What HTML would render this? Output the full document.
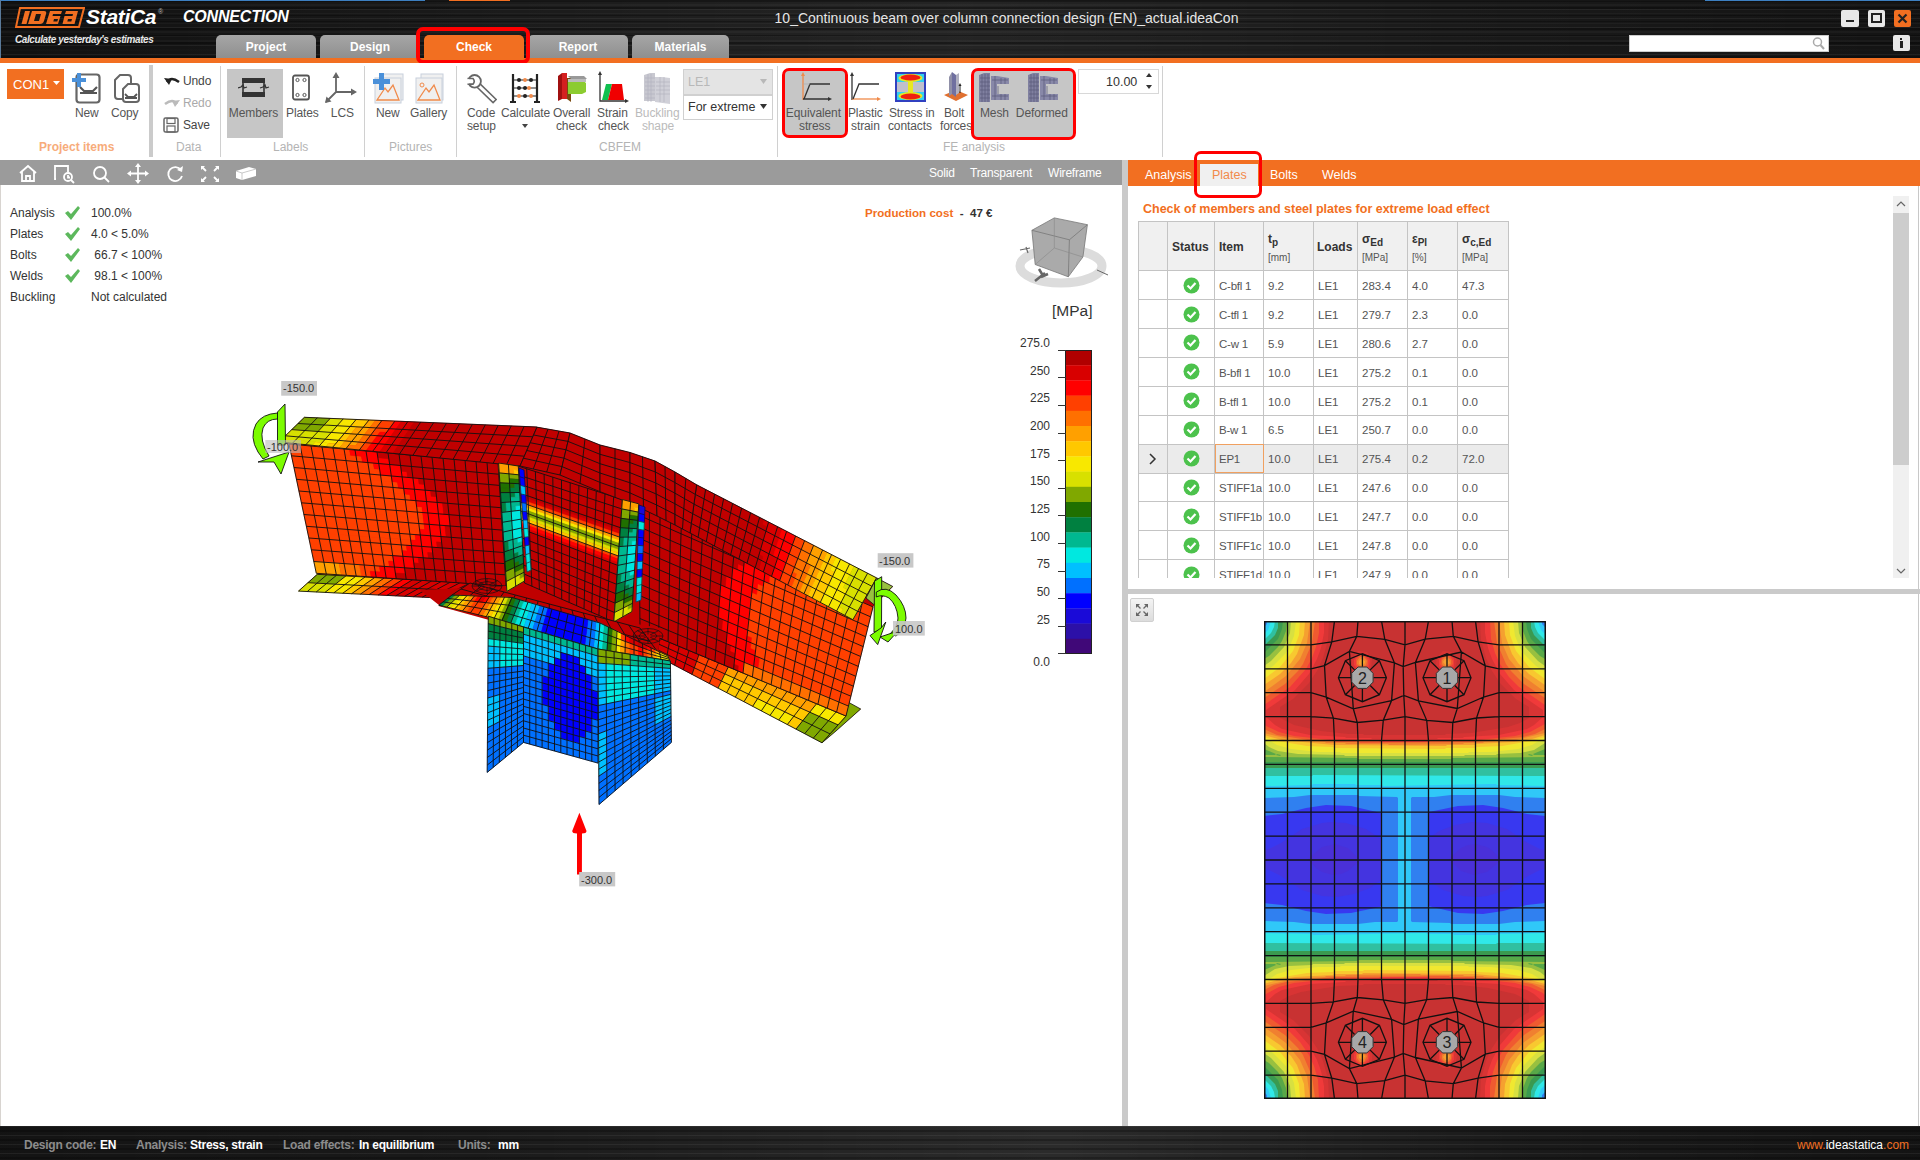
<!DOCTYPE html>
<html><head><meta charset="utf-8">
<style>
*{margin:0;padding:0;box-sizing:border-box}
html,body{width:1920px;height:1160px;overflow:hidden;background:#fff;font-family:"Liberation Sans",sans-serif;position:relative}
.a{position:absolute}
.dark{background-color:#0c0c0c;background-image:repeating-linear-gradient(180deg,rgba(255,255,255,0.06) 0 1px,rgba(0,0,0,0) 1px 4px,rgba(255,255,255,0.03) 4px 6px,rgba(0,0,0,0) 6px 9px),repeating-linear-gradient(180deg,rgba(0,0,0,0.3) 0 2px,rgba(0,0,0,0) 2px 7px),linear-gradient(90deg,rgba(255,255,255,0.02),rgba(255,255,255,0.05) 20%,rgba(255,255,255,0.1) 50%,rgba(255,255,255,0.06) 75%,rgba(255,255,255,0.03))}
.dark2{background-color:#0c0c0c;background-image:repeating-linear-gradient(180deg,rgba(255,255,255,0.06) 0 1px,rgba(0,0,0,0) 1px 4px,rgba(0,0,0,0.25) 4px 6px,rgba(0,0,0,0) 6px 9px),linear-gradient(90deg,rgba(255,255,255,0.03),rgba(255,255,255,0.06) 25%,rgba(255,255,255,0.13) 55%,rgba(255,255,255,0.06) 80%,rgba(255,255,255,0.03))}
.tab{position:absolute;top:35px;height:23px;width:100px;border-radius:5px 5px 0 0;background:linear-gradient(#a6a6a6,#8f8f8f);color:#fff;font-weight:bold;font-size:12px;text-align:center;line-height:25px}
.lbl{position:absolute;font-size:12px;letter-spacing:-0.1px;color:#555;white-space:nowrap}
.grp{position:absolute;top:140px;font-size:12px;color:#b4b4b4;white-space:nowrap}
.sep{position:absolute;top:66px;width:1px;height:91px;background:#d0d0d0}
</style></head><body>
<!-- title bar -->
<div class="a dark" style="left:0;top:0;width:1920px;height:58px"></div>
<div class="a" style="left:0;top:0;width:1920px;height:1px;background:#3d7fc0"></div>
<div class="a" style="left:449px;top:0;width:61px;height:1px;background:#f26f21"></div>
<div class="a" style="left:425px;top:0;width:24px;height:1px;background:#161616"></div>
<div class="a" style="left:510px;top:0;width:1195px;height:1px;background:#161616"></div>
<div class="a" style="left:0;top:0;width:1px;height:58px;background:#5a7a9a"></div><div class="a" style="left:0;top:63px;width:1px;height:1063px;background:#d8d4d0"></div>
<!-- logo -->
<svg class="a" style="left:15px;top:7px" width="70" height="22" viewBox="0 0 70 22">
<path d="M5 1 H69 L64 20 H1 Z" fill="none" stroke="#f26f21" stroke-width="2"/>
<path d="M10 4 h5 l-3.5 13 h-5 z M17 4 h12 q3 0 2 3 l-2 7 q-1 3 -4 3 h-12 z M35 4 h12 l-1 3 h-8 l-0.5 2 h8 l-2.5 8 h-12 z M51 4 h12 l-3.5 13 h-12 l2 -8 h8 l0.5 -2 h-8 z" fill="#f26f21"/>
<path d="M21 7 h5 l-2 7 h-5 z M39 12 h4 l-0.7 2.5 h-4 z M53 12 h4 l-0.7 2.5 h-4 z" fill="#161616"/>
</svg>
<div class="a" style="left:86px;top:5px;font-size:21px;font-style:italic;font-weight:bold;color:#fff;letter-spacing:-0.3px">StatiCa</div>
<div class="a" style="left:158px;top:8px;font-size:7px;color:#bbb">&#174;</div>
<div class="a" style="left:183px;top:8px;font-size:16px;font-style:italic;font-weight:bold;color:#fff;letter-spacing:-0.2px">CONNECTION</div>
<div class="a" style="left:15px;top:34px;font-size:10px;font-style:italic;font-weight:bold;color:#e8e8e8;letter-spacing:-0.4px">Calculate yesterday's estimates</div>
<div class="a" style="left:0;top:10px;width:2013px;text-align:center;font-size:14px;color:#e6e6e6">10_Continuous beam over column connection design (EN)_actual.ideaCon</div>
<!-- window buttons -->
<div class="a" style="left:1841px;top:10px;width:18px;height:17px;background:#e8e8e8;border-radius:2px"></div>
<div class="a" style="left:1846px;top:20px;width:8px;height:2px;background:#222"></div>
<div class="a" style="left:1868px;top:10px;width:17px;height:17px;background:#e8e8e8;border-radius:2px"></div>
<div class="a" style="left:1871px;top:13px;width:11px;height:10px;border:2px solid #222"></div>
<div class="a" style="left:1894px;top:10px;width:17px;height:17px;background:#f26f21;border-radius:2px"></div>
<svg class="a" style="left:1894px;top:10px" width="17" height="17"><path d="M4.5 4.5 L12.5 12.5 M12.5 4.5 L4.5 12.5" stroke="#222" stroke-width="2.2"/></svg>
<!-- search -->
<div class="a" style="left:1629px;top:35px;width:200px;height:17px;background:#fff;border:1px solid #ccc"></div>
<svg class="a" style="left:1810px;top:35px" width="18" height="17"><circle cx="7.5" cy="7" r="4" fill="none" stroke="#aaa" stroke-width="1.5"/><path d="M10.5 10 L14 14" stroke="#aaa" stroke-width="2"/></svg>
<div class="a" style="left:1893px;top:35px;width:17px;height:16px;background:#e8e8e8;border-radius:2px"></div>
<div class="a" style="left:1900px;top:38px;width:2px;height:2px;background:#222"></div>
<div class="a" style="left:1900px;top:41px;width:3px;height:7px;background:#222"></div>
<!-- tabs -->
<div class="tab" style="left:216px">Project</div>
<div class="tab" style="left:320px">Design</div>
<div class="tab" style="left:424px;background:#f26f21">Check</div>
<div class="tab" style="left:528px">Report</div>
<div class="tab" style="left:632px;width:97px">Materials</div>
<div class="a" style="left:0;top:58px;width:1920px;height:5px;background:#f26f21"></div>
<div class="a" style="left:416px;top:27px;width:114px;height:37px;border:4px solid #ff0000;border-radius:7px"></div>

<!-- ribbon -->
<div class="a" style="left:0;top:63px;width:1920px;height:97px;background:#fff"></div>
<div class="a" style="left:7px;top:69px;width:57px;height:30px;background:#f26f21"></div>
<div class="a" style="left:13px;top:77px;font-size:13px;color:#fff">CON1</div>
<svg class="a" style="left:53px;top:81px" width="7" height="4"><path d="M0 0h7L3.5 4z" fill="#fff"/></svg>
<!-- New icon -->
<svg class="a" style="left:71px;top:72px" width="32" height="32">
<rect x="5.5" y="2.5" width="23" height="28" rx="3" fill="none" stroke="#666" stroke-width="2.2"/>
<path d="M9 15 l4 4 h9 l4 -4 M9 21 h17" stroke="#555" stroke-width="2.2" fill="none"/>
<path d="M5 0 h4 v5 h5 v4 h-5 v5 h-4 v-5 h-5 v-4 h5 z" fill="#4a90d9" transform="translate(1,1)"/>
</svg>
<div class="lbl" style="left:41.8px;width:90px;text-align:center;top:106px">New</div>
<!-- Copy icon -->
<svg class="a" style="left:111px;top:72px" width="32" height="32">
<path d="M4 8 l5 -5 h8 q3 0 3 3 v18 q0 3 -3 3 h-10 q-3 0 -3 -3 z" fill="#fff" stroke="#666" stroke-width="2"/>
<path d="M12 17 l5 -5 h8 q3 0 3 3 v12 q0 3 -3 3 h-10 q-3 0 -3 -3 z" fill="#fff" stroke="#666" stroke-width="2"/>
<path d="M14 22 l3 3 h6 l3 -3 M14 26 h12" stroke="#555" stroke-width="1.8" fill="none"/>
</svg>
<div class="lbl" style="left:79.7px;width:90px;text-align:center;top:106px">Copy</div>
<div class="a" style="left:149px;top:65px;width:4px;height:92px;background:#cbcbcb"></div>
<div class="grp" style="left:39px;color:#f7ac7b;font-weight:bold">Project items</div>
<!-- undo redo save -->
<svg class="a" style="left:163px;top:74px" width="18" height="14"><path d="M4 8 q4 -6 12 0" stroke="#222" stroke-width="2.5" fill="none"/><path d="M1 4 l5 7 l3 -6z" fill="#222"/></svg>
<div class="lbl" style="left:152.1px;width:90px;text-align:center;top:74px;color:#444">Undo</div>
<svg class="a" style="left:163px;top:96px" width="18" height="14"><path d="M14 8 q-4 -6 -12 0" stroke="#bbb" stroke-width="2.5" fill="none"/><path d="M17 4 l-5 7 l-3 -6z" fill="#bbb"/></svg>
<div class="lbl" style="left:152.1px;width:90px;text-align:center;top:96px;color:#aaa">Redo</div>
<svg class="a" style="left:163px;top:117px" width="16" height="16"><rect x="1" y="1" width="14" height="14" rx="1.5" fill="none" stroke="#666" stroke-width="1.5"/><rect x="4" y="1.5" width="8" height="5" fill="none" stroke="#666" stroke-width="1.2"/><rect x="4" y="9" width="8" height="6" fill="none" stroke="#666" stroke-width="1.2"/></svg>
<div class="lbl" style="left:151.4px;width:90px;text-align:center;top:118px;color:#444">Save</div>
<div class="sep" style="left:220px"></div>
<div class="grp" style="left:176px">Data</div>
<!-- labels group -->
<div class="a" style="left:227px;top:69px;width:56px;height:69px;background:#c6c6c6"></div>
<svg class="a" style="left:238px;top:76px" width="34" height="24">
<rect x="4" y="2" width="23" height="5" fill="#333"/><rect x="4" y="16" width="23" height="5" fill="#333"/>
<path d="M5 7 v9 M26 7 v9" stroke="#333" stroke-width="1.6"/>
<path d="M0 12 l3 -1 l2 -2 l1 3 l3 -1 M22 12 l3 -1 l2 -2 l1 3 l3 -1" stroke="#333" stroke-width="1.3" fill="none"/>
</svg>
<div class="lbl" style="left:208.5px;width:90px;text-align:center;top:106px">Members</div>
<svg class="a" style="left:290px;top:74px" width="22" height="28"><rect x="3" y="1.5" width="16" height="24" rx="2" fill="none" stroke="#555" stroke-width="1.8"/><circle cx="7.5" cy="6" r="1.6" fill="none" stroke="#555"/><circle cx="14.5" cy="6" r="1.6" fill="none" stroke="#555"/><circle cx="7.5" cy="21" r="1.6" fill="none" stroke="#555"/><circle cx="14.5" cy="21" r="1.6" fill="none" stroke="#555"/></svg>
<div class="lbl" style="left:257.4px;width:90px;text-align:center;top:106px">Plates</div>
<svg class="a" style="left:323px;top:72px" width="34" height="32"><path d="M13 3 v17 h18 M13 20 L3 30" stroke="#666" stroke-width="1.8" fill="none"/><path d="M13 0 l-3.5 6 h7z M34 20 l-6 -3.5 v7z M2 31 l1.5 -6.5 l5 5z" fill="#666"/></svg>
<div class="lbl" style="left:297.4px;width:90px;text-align:center;top:106px">LCS</div>
<div class="grp" style="left:273px">Labels</div>
<div class="sep" style="left:364px"></div>
<!-- pictures -->
<svg class="a" style="left:372px;top:72px" width="34" height="32">
<rect x="9" y="2" width="22" height="26" fill="#f0f0f0" stroke="#c8d0dc" stroke-width="1"/>
<rect x="3" y="6" width="26" height="25" fill="#f0f0f0" stroke="#c8d0dc" stroke-width="1"/>
<path d="M5 28 l8 -12 l3 4 l5 -7 l6 15z" fill="none" stroke="#f08a4a" stroke-width="1.3"/>
<path d="M7 1 h5 v6 h6 v5 h-6 v6 h-5 v-6 h-6 v-5 h6 z" fill="#4a90d9"/>
</svg>
<div class="lbl" style="left:342.8px;width:90px;text-align:center;top:106px">New</div>
<svg class="a" style="left:412px;top:72px" width="34" height="32">
<rect x="9" y="2" width="22" height="26" fill="#f0f0f0" stroke="#c8d0dc" stroke-width="1"/>
<rect x="4" y="6" width="26" height="25" fill="#f0f0f0" stroke="#c8d0dc" stroke-width="1"/>
<path d="M6 28 l8 -12 l3 4 l5 -7 l6 15z" fill="none" stroke="#f08a4a" stroke-width="1.3"/>
<circle cx="10" cy="13" r="2" fill="none" stroke="#f08a4a" stroke-width="1"/>
</svg>
<div class="lbl" style="left:383.6px;width:90px;text-align:center;top:106px">Gallery</div>
<div class="grp" style="left:389px">Pictures</div>
<div class="sep" style="left:456px"></div>
<!-- CBFEM -->
<svg class="a" style="left:465px;top:72px" width="32" height="32"><path d="M13 13 L28 27.5" stroke="#666" stroke-width="6" stroke-linecap="square"/><path d="M13 13 L28 27.5" stroke="#fff" stroke-width="3" stroke-linecap="square"/><circle cx="9.6" cy="9.3" r="6.3" fill="#fff" stroke="#666" stroke-width="1.8"/><path d="M2.5 6.5 h5.5 q2.5 2.8 0 5.6 h-5.5" fill="#fff" stroke="#666" stroke-width="1.6"/><rect x="1" y="7.3" width="3" height="4" fill="#fff"/></svg>
<div class="lbl" style="left:436.1px;width:90px;text-align:center;top:106px">Code</div>
<div class="lbl" style="left:436.4px;width:90px;text-align:center;top:119px">setup</div>
<svg class="a" style="left:510px;top:72px" width="30" height="32"><path d="M3 2 v28 M27 2 v28 M0 30 h6 M24 30 h6" stroke="#222" stroke-width="2.2"/><path d="M3 8 h24 M3 16 h24 M3 24 h24" stroke="#222" stroke-width="1.2"/><circle cx="9" cy="8" r="2" fill="#222"/><circle cx="15" cy="8" r="2" fill="#f08a4a"/><circle cx="21" cy="8" r="2" fill="#222"/><circle cx="9" cy="16" r="2" fill="#222"/><circle cx="15" cy="16" r="2" fill="#222"/><circle cx="19" cy="16" r="2" fill="#f08a4a"/><circle cx="9" cy="24" r="2" fill="#f08a4a"/><circle cx="15" cy="24" r="2" fill="#222"/><circle cx="21" cy="24" r="2" fill="#f08a4a"/></svg>
<div class="lbl" style="left:480.5px;width:90px;text-align:center;top:106px">Calculate</div>
<svg class="a" style="left:522px;top:124px" width="6" height="4"><path d="M0 0h6L3 4z" fill="#444"/></svg>
<svg class="a" style="left:556px;top:72px" width="32" height="32"><path d="M2 4 l4 -3 v26 l-4 2z" fill="#a01010"/><path d="M6 1 h5 v26 h-5z" fill="#d42020"/><path d="M11 6 l4 0 v24 l-4 -3z" fill="#7a4a10"/><path d="M12 8 h14 l4 3 v9 l-4 2 h-14z" fill="#8ccc30"/><path d="M12 4 h16 l3 3 h-16z" fill="#999"/><path d="M12 7 h18 v3 h-18z" fill="#bbb"/></svg>
<div class="lbl" style="left:526.6px;width:90px;text-align:center;top:106px">Overall</div>
<div class="lbl" style="left:526.4px;width:90px;text-align:center;top:119px">check</div>
<svg class="a" style="left:597px;top:71px" width="32" height="32"><path d="M3 2 v28 h27" stroke="#333" stroke-width="1.3" fill="none"/><path d="M3 0 l-2 4 h4z M32 30 l-4 -2 v4z" fill="#333"/><path d="M5 29 l4 -16 h6 l-4 16z" fill="#10c050"/><path d="M11 29 l4 -16 h10 l2 16z" fill="#f00000"/></svg>
<div class="lbl" style="left:567.4px;width:90px;text-align:center;top:106px">Strain</div>
<div class="lbl" style="left:568.4px;width:90px;text-align:center;top:119px">check</div>
<svg class="a" style="left:642px;top:72px" width="32" height="32"><path d="M2 3 l6 -2 h5 v28 h-11z" fill="#c8c8d0"/><path d="M13 5 h7 l8 1 v26 l-15 -2z" fill="#d0d0d8"/><path d="M3 6 h10 M3 10 h10 M3 14 h10 M3 18 h10 M3 22 h10 M3 26 h10 M6 2 v28 M9 2 v28 M14 10 h14 M14 14 h14 M14 18 h14 M14 22 h14 M18 5 v25 M22 5 v25" stroke="#b0b0bc" stroke-width="0.6"/></svg>
<div class="lbl" style="left:612.2px;width:90px;text-align:center;top:106px;color:#bbb">Buckling</div>
<div class="lbl" style="left:613.0px;width:90px;text-align:center;top:119px;color:#bbb">shape</div>
<div class="a" style="left:683px;top:69px;width:90px;height:26px;background:#e4e4e4;border:1px solid #d0d0d0"></div>
<div class="a" style="left:688px;top:75px;font-size:12.5px;color:#b8b8b8">LE1</div>
<svg class="a" style="left:760px;top:79px" width="7" height="5"><path d="M0 0h7L3.5 5z" fill="#b8b8b8"/></svg>
<div class="a" style="left:683px;top:95px;width:90px;height:25px;background:#fff;border:1px solid #d0d0d0"></div>
<div class="a" style="left:688px;top:100px;font-size:12.5px;color:#333">For extreme</div>
<svg class="a" style="left:760px;top:104px" width="7" height="5"><path d="M0 0h7L3.5 5z" fill="#333"/></svg>
<div class="grp" style="left:599px">CBFEM</div>
<div class="sep" style="left:777px"></div>
<!-- FE analysis -->
<div class="a" style="left:782px;top:68px;width:66px;height:70px;border:3px solid #ff0000;border-radius:7px;background:#c6c6c6;box-shadow:inset 0 0 0 1px #c6c6c6"></div>
<svg class="a" style="left:798px;top:72px" width="34" height="30"><path d="M5 2 v26" stroke="#f08a4a" stroke-width="1.3"/><path d="M5 0 l-2 4 h4z" fill="#f08a4a"/><path d="M5 27 h26 M6 27 l6 -15 h20" stroke="#333" stroke-width="1.3" fill="none"/><path d="M34 27 l-4 -2 v4z" fill="#333"/><path d="M5 12 h7" stroke="#aaa" stroke-width="0.6"/></svg>
<div class="lbl" style="left:768.4px;width:90px;text-align:center;top:106px">Equivalent</div>
<div class="lbl" style="left:769.7px;width:90px;text-align:center;top:119px">stress</div>
<svg class="a" style="left:847px;top:72px" width="34" height="30"><path d="M5 2 v26" stroke="#333" stroke-width="1.3"/><path d="M5 0 l-2 4 h4z" fill="#333"/><path d="M5 27 h26" stroke="#f08a4a" stroke-width="1.3" fill="none"/><path d="M6 27 l6 -15 h20" stroke="#333" stroke-width="1.3" fill="none"/><path d="M34 27 l-4 -2 v4z" fill="#f08a4a"/></svg>
<div class="lbl" style="left:820.3px;width:90px;text-align:center;top:106px">Plastic</div>
<div class="lbl" style="left:820.4px;width:90px;text-align:center;top:119px">strain</div>
<svg class="a" style="left:895px;top:72px" width="32" height="31"><rect x="0" y="0" width="31" height="30" fill="#3040c0"/><rect x="2" y="2" width="27" height="26" fill="#30d0f0"/><ellipse cx="15.5" cy="6" rx="12" ry="4" fill="#e8e820"/><ellipse cx="15.5" cy="24" rx="12" ry="4" fill="#e8e820"/><ellipse cx="15.5" cy="5.5" rx="10" ry="3" fill="#f02010"/><ellipse cx="15.5" cy="24.5" rx="10" ry="3" fill="#f02010"/><rect x="2" y="10" width="11" height="10" fill="#c0c0cc"/><rect x="18" y="10" width="11" height="10" fill="#c0c0cc"/><rect x="13" y="9" width="5" height="12" fill="#e8e820"/></svg>
<div class="lbl" style="left:866.8px;width:90px;text-align:center;top:106px">Stress in</div>
<div class="lbl" style="left:864.9px;width:90px;text-align:center;top:119px">contacts</div>
<svg class="a" style="left:942px;top:71px" width="26" height="32"><path d="M2 24 l12 -5 l12 5 l-12 6z" fill="#e07030"/><path d="M7 6 l3 -5 v22 l-3 2z" fill="#9090a8"/><path d="M10 1 l4 3 v22 l-4 -3z" fill="#7070a0"/><path d="M14 4 l3 -2 v20 l-3 2z" fill="#b0b0c0"/><path d="M18 14 v8" stroke="#222" stroke-width="1"/><path d="M18 12 l-1.5 3 h3z" fill="#222"/></svg>
<div class="lbl" style="left:909.1px;width:90px;text-align:center;top:106px">Bolt</div>
<div class="lbl" style="left:911.0px;width:90px;text-align:center;top:119px">forces</div>
<div class="a" style="left:971px;top:68px;width:105px;height:72px;border:3px solid #ff0000;border-radius:7px;background:#c6c6c6"></div>
<svg class="a" style="left:978px;top:72px" width="32" height="31"><path d="M1 3 l5 -2 h6 v29 h-11z" fill="#8080a0"/><path d="M13 4 h6 l12 2 v6 h-12 v10 h12 v6 h-18z" fill="#8888a8"/><path d="M2 6h10M2 10h10M2 14h10M2 18h10M2 22h10M2 26h10M4 2v28M7 2v28M10 2v28M14 8h16M20 14v8M14 24h16M17 4v24M23 6v6M27 6v6M23 22v6M27 22v6" stroke="#5a5a78" stroke-width="0.7"/></svg>
<div class="lbl" style="left:949.4px;width:90px;text-align:center;top:106px">Mesh</div>
<svg class="a" style="left:1027px;top:72px" width="32" height="31"><path d="M1 3 l5 -2 h6 v29 h-11z" fill="#8080a0"/><path d="M13 4 h6 l12 2 v6 h-12 v10 h12 v6 h-18z" fill="#8888a8"/><path d="M2 6h10M2 10h10M2 14h10M2 18h10M2 22h10M2 26h10M4 2v28M7 2v28M10 2v28M14 8h16M20 14v8M14 24h16M17 4v24M23 6v6M27 6v6M23 22v6M27 22v6" stroke="#5a5a78" stroke-width="0.7"/></svg>
<div class="lbl" style="left:996.8px;width:90px;text-align:center;top:106px">Deformed</div>
<div class="a" style="left:1078px;top:69px;width:81px;height:25px;background:#fff;border:1px solid #d8d8d8"></div>
<div class="a" style="left:1106px;top:75px;font-size:12.5px;color:#333">10.00</div>
<svg class="a" style="left:1144px;top:72px" width="10" height="19"><path d="M2 5h6L5 1z M2 13h6L5 17z" fill="#333"/></svg>
<div class="grp" style="left:943px">FE analysis</div>
<div class="sep" style="left:1162px"></div>

<!-- toolbar -->
<div class="a" style="left:0;top:160px;width:1122px;height:25px;background:#9b9b9b"></div>
<svg class="a" style="left:0;top:161px" width="270" height="25">
<g fill="none" stroke="#fff" stroke-width="1.8">
<path d="M20 12 L28 5 L36 12 M22 10.5 V20 H34 V10.5 M26 20 V15 H30 V20"/>
<path d="M56 18 H55 V5 H68 V11"/><circle cx="68" cy="16" r="4"/><path d="M71 19 L74 22 M68 14 v2.5 h2"/>
<circle cx="100" cy="12" r="6"/><path d="M104.5 16.5 L109 21"/>
<path d="M138 4 V21 M129.5 12.5 H146.5"/>
<path d="M181 9 A7 7 0 1 0 182 15"/>
<path d="M202 6 L206 10 M218 6 L214 10 M202 20 L206 16 M218 20 L214 16"/>
</g>
<g fill="#fff">
<path d="M138 2 l-3 4 h6z M138 23 l-3 -4 h6z M127 12.5 l4 -3 v6z M149 12.5 l-4 -3 v6z"/>
<path d="M183 5 l-1 6 l-5 -2z"/>
<path d="M201 5 v4 l4 -4z M219 5 v4 l-4 -4z M201 21 v-4 l4 4z M219 21 v-4 l-4 4z"/>
<path d="M236 10 l13 -4 l7 2 v7 l-14 4 l-6 -2z" fill="#fff"/>
</g>
<path d="M236 10 l6 2 l14 -4 M242 12 v7" stroke="#bbb" stroke-width="0.8" fill="none"/>
</svg>
<div class="a" style="left:929px;top:166px;font-size:12px;letter-spacing:-0.2px;color:#fff">Solid</div>
<div class="a" style="left:970px;top:166px;font-size:12px;letter-spacing:-0.2px;color:#fff">Transparent</div>
<div class="a" style="left:1048px;top:166px;font-size:12px;letter-spacing:-0.2px;color:#fff">Wireframe</div>
<!-- info panel -->
<div class="a" style="left:10px;top:203px;font-size:12px;color:#333;line-height:21.1px">Analysis<br>Plates<br>Bolts<br>Welds<br>Buckling</div>
<div class="a" style="left:91px;top:203px;font-size:12px;color:#333;line-height:21.1px">100.0%<br>4.0 &lt; 5.0%<br>&nbsp;66.7 &lt; 100%<br>&nbsp;98.1 &lt; 100%<br>Not calculated</div>
<svg class="a" style="left:63px;top:205px" width="20" height="90"><g fill="#5cb85c">
<path d="M2 8 l3 -2 l3 3 l7 -8 l2 2 l-9 12z"/>
<path d="M2 29 l3 -2 l3 3 l7 -8 l2 2 l-9 12z"/>
<path d="M2 50 l3 -2 l3 3 l7 -8 l2 2 l-9 12z"/>
<path d="M2 71 l3 -2 l3 3 l7 -8 l2 2 l-9 12z"/>
</g></svg>
<div class="a" style="left:865px;top:206px;font-size:11.6px;color:#f26f21;font-weight:bold">Production cost <span style="color:#333">&nbsp;-&nbsp; 47 &#8364;</span></div>
<div class="a" style="left:1122px;top:160px;width:6px;height:966px;background:#cacaca"></div>
<div class="a" style="left:1128px;top:160px;width:792px;height:26px;background:#f26f21"></div>

<!--MODEL--><svg class="a" style="left:0;top:0" width="1122" height="1126" viewBox="0 0 1122 1126"><path fill="#c00000" d="M304.4 417.3 L537 427 L570 433 L600 445 L630 452.5 L655 461 L675 472 L696.6 484.8 L876.6 577.9 L892.8 586.5 L873 606.9 L846 704 L860.7 709 L822 742.8 L670.3 660.7 L651.7 664.8 L438.6 605.9 L449 593.5 L298.5 591.1 L317.3 574.3 L289 444 L279 442Z"/><path fill="#80a800" stroke="#80a800" stroke-width="0.4" d="M317.3 574.3 345.9 575.9 335.5 584.2 307.9 582.7Z"/><path fill="#f8e800" stroke="#f8e800" stroke-width="0.4" d="M345.9 575.9 365.0 577.0 353.9 585.1 335.5 584.2ZM335.5 584.2 353.9 585.1 342.7 593.3 325.0 592.4Z"/><path fill="#ffc800" stroke="#ffc800" stroke-width="0.4" d="M365.0 577.0 374.6 577.6 363.1 585.6 353.9 585.1ZM353.9 585.1 363.1 585.6 351.6 593.7 342.7 593.3Z"/><path fill="#ffa000" stroke="#ffa000" stroke-width="0.4" d="M374.6 577.6 384.1 578.1 372.3 586.1 363.1 585.6ZM363.1 585.6 372.3 586.1 360.4 594.1 351.6 593.7Z"/><path fill="#ff7000" stroke="#ff7000" stroke-width="0.4" d="M384.1 578.1 393.6 578.6 381.4 586.6 372.3 586.1ZM372.3 586.1 381.4 586.6 369.2 594.5 360.4 594.1Z"/><path fill="#ff4000" stroke="#ff4000" stroke-width="0.4" d="M393.6 578.6 403.2 579.2 390.6 587.1 381.4 586.6ZM381.4 586.6 390.6 587.1 378.1 595.0 369.2 594.5Z"/><path fill="#ff0000" stroke="#ff0000" stroke-width="0.4" d="M403.2 579.2 412.7 579.7 399.8 587.6 390.6 587.1ZM390.6 587.1 399.8 587.6 386.9 595.4 378.1 595.0Z"/><path fill="#d80000" stroke="#d80000" stroke-width="0.4" d="M412.7 579.7 470.0 583.0 455.0 590.5 399.8 587.6ZM399.8 587.6 455.0 590.5 440.0 598.0 386.9 595.4Z"/><path fill="#d8e000" stroke="#d8e000" stroke-width="0.4" d="M307.9 582.7 335.5 584.2 325.0 592.4 298.5 591.1Z"/><path fill="none" stroke="#111" stroke-width="0.9" d="M317.3 574.3L298.5 591.1M326.8 574.8L307.3 591.5M336.4 575.4L316.2 592.0M345.9 575.9L325.0 592.4M355.5 576.5L333.9 592.8M365.0 577.0L342.7 593.3M374.6 577.6L351.6 593.7M384.1 578.1L360.4 594.1M393.6 578.6L369.2 594.5M403.2 579.2L378.1 595.0M412.7 579.7L386.9 595.4M422.3 580.3L395.8 595.8M431.8 580.8L404.6 596.3M441.4 581.4L413.5 596.7M450.9 581.9L422.3 597.1M460.5 582.5L431.2 597.6M470.0 583.0L440.0 598.0M317.3 574.3L470.0 583.0M307.9 582.7L455.0 590.5M298.5 591.1L440.0 598.0"/><path fill="#ff4000" stroke="#ff4000" stroke-width="0.4" d="M289.0 444.0 349.5 449.5 350.5 455.3 290.2 449.9ZM290.2 449.9 361.4 456.3 362.4 462.1 291.5 455.8ZM291.5 455.8 373.3 463.0 374.2 468.8 292.7 461.6ZM292.7 461.6 379.6 469.3 380.5 475.0 294.0 467.5ZM294.0 467.5 391.3 476.0 392.1 481.7 295.2 473.4ZM295.2 473.4 397.5 482.2 398.3 487.9 296.4 479.3ZM296.4 479.3 403.7 488.4 404.5 494.1 297.7 485.1ZM297.7 485.1 409.8 494.5 410.5 500.3 298.9 491.0ZM298.9 491.0 415.9 500.7 416.6 506.4 300.2 496.9ZM300.2 496.9 421.9 506.8 422.6 512.5 301.4 502.8ZM301.4 502.8 422.6 512.5 423.3 518.2 302.6 508.6ZM302.6 508.6 423.3 518.2 424.0 523.9 303.9 514.5ZM303.9 514.5 424.0 523.9 424.7 529.7 305.1 520.4ZM305.1 520.4 419.5 529.2 420.3 535.0 306.4 526.3ZM306.4 526.3 415.1 534.6 415.8 540.3 307.6 532.2ZM307.6 532.2 410.7 539.9 411.5 545.6 308.9 538.0ZM308.9 538.0 406.3 545.2 407.1 551.0 310.1 543.9ZM310.1 543.9 402.0 550.6 402.9 556.3 311.3 549.8ZM311.3 549.8 392.7 555.6 393.6 561.4 312.6 555.7ZM312.6 555.7 388.5 561.0 389.4 566.8 313.8 561.5ZM359.2 564.7 379.3 566.1 380.3 571.9 360.2 570.5ZM360.2 570.5 370.2 571.2 371.2 577.0 361.2 576.3Z"/><path fill="#ff0000" stroke="#ff0000" stroke-width="0.4" d="M349.5 449.5 377.0 452.0 377.9 457.8 350.5 455.3ZM361.4 456.3 388.8 458.7 389.7 464.5 362.4 462.1ZM373.3 463.0 400.6 465.5 401.3 471.2 374.2 468.8ZM379.6 469.3 406.8 471.7 407.5 477.4 380.5 475.0ZM391.3 476.0 418.3 478.3 419.0 484.0 392.1 481.7ZM397.5 482.2 424.4 484.5 425.1 490.2 398.3 487.9ZM403.7 488.4 430.5 490.6 431.1 496.3 404.5 494.1ZM409.8 494.5 436.5 496.8 437.1 502.5 410.5 500.3ZM415.9 500.7 442.4 502.9 443.1 508.6 416.6 506.4ZM421.9 506.8 443.1 508.6 443.7 514.2 422.6 512.5ZM422.6 512.5 448.9 514.7 449.5 520.3 423.3 518.2ZM423.3 518.2 449.5 520.3 450.1 526.0 424.0 523.9ZM424.0 523.9 444.9 525.6 445.5 531.3 424.7 529.7ZM419.5 529.2 445.5 531.3 446.1 536.9 420.3 535.0ZM415.1 534.6 441.0 536.5 441.6 542.2 415.8 540.3ZM410.7 539.9 436.5 541.8 437.1 547.5 411.5 545.6ZM406.3 545.2 432.0 547.1 432.7 552.8 407.1 551.0ZM402.0 550.6 427.6 552.5 428.3 558.2 402.9 556.3ZM392.7 555.6 418.1 557.4 418.9 563.2 393.6 561.4ZM388.5 561.0 413.8 562.8 414.6 568.5 389.4 566.8ZM379.3 566.1 404.5 567.8 405.3 573.6 380.3 571.9ZM370.2 571.2 395.3 572.9 396.2 578.6 371.2 577.0Z"/><path fill="#c00000" stroke="#c00000" stroke-width="0.4" d="M377.0 452.0 498.0 463.0 498.4 468.6 377.9 457.8ZM388.8 458.7 498.4 468.6 498.7 474.2 389.7 464.5ZM400.6 465.5 498.7 474.2 499.1 479.8 401.3 471.2ZM406.8 471.7 499.1 479.8 499.5 485.4 407.5 477.4ZM418.3 478.3 499.5 485.4 499.8 491.0 419.0 484.0ZM424.4 484.5 499.8 491.0 500.2 496.5 425.1 490.2ZM430.5 490.6 500.2 496.5 500.5 502.1 431.1 496.3ZM436.5 496.8 500.5 502.1 500.9 507.7 437.1 502.5ZM442.4 502.9 500.9 507.7 501.3 513.3 443.1 508.6ZM443.1 508.6 501.3 513.3 501.6 518.9 443.7 514.2ZM448.9 514.7 501.6 518.9 502.0 524.5 449.5 520.3ZM449.5 520.3 502.0 524.5 502.4 530.1 450.1 526.0ZM444.9 525.6 502.4 530.1 502.7 535.7 445.5 531.3ZM445.5 531.3 502.7 535.7 503.1 541.3 446.1 536.9ZM441.0 536.5 503.1 541.3 503.5 546.9 441.6 542.2ZM436.5 541.8 503.5 546.9 503.8 552.5 437.1 547.5ZM432.0 547.1 503.8 552.5 504.2 558.0 432.7 552.8ZM427.6 552.5 504.2 558.0 504.5 563.6 428.3 558.2ZM418.1 557.4 504.5 563.6 504.9 569.2 418.9 563.2ZM413.8 562.8 504.9 569.2 505.3 574.8 414.6 568.5ZM404.5 567.8 505.3 574.8 505.6 580.4 405.3 573.6ZM395.3 572.9 505.6 580.4 506.0 586.0 396.2 578.6Z"/><path fill="#ffa000" stroke="#ffa000" stroke-width="0.4" d="M313.8 561.5 339.0 563.3 340.1 569.1 315.1 567.4ZM315.1 567.4 340.1 569.1 341.3 575.0 316.3 573.3Z"/><path fill="#ff7000" stroke="#ff7000" stroke-width="0.4" d="M339.0 563.3 359.2 564.7 360.2 570.5 340.1 569.1ZM340.1 569.1 360.2 570.5 361.2 576.3 341.3 575.0Z"/><path fill="none" stroke="#111" stroke-width="0.9" d="M289.0 444.0L316.3 573.3M300.0 445.0L326.3 574.0M311.0 446.0L336.3 574.6M322.0 447.0L346.3 575.3M333.0 448.0L356.2 576.0M344.0 449.0L366.2 576.6M355.0 450.0L376.2 577.3M366.0 451.0L386.2 578.0M377.0 452.0L396.2 578.6M388.0 453.0L406.2 579.3M399.0 454.0L416.1 580.0M410.0 455.0L426.1 580.7M421.0 456.0L436.1 581.3M432.0 457.0L446.1 582.0M443.0 458.0L456.1 582.7M454.0 459.0L466.1 583.3M465.0 460.0L476.0 584.0M476.0 461.0L486.0 584.7M487.0 462.0L496.0 585.3M498.0 463.0L506.0 586.0M289.0 444.0L498.0 463.0M291.5 455.8L498.7 474.2M294.0 467.5L499.5 485.4M296.4 479.3L500.2 496.5M298.9 491.0L500.9 507.7M301.4 502.8L501.6 518.9M303.9 514.5L502.4 530.1M306.4 526.3L503.1 541.3M308.9 538.0L503.8 552.5M311.3 549.8L504.5 563.6M313.8 561.5L505.3 574.8M316.3 573.3L506.0 586.0"/><path fill="#80a800" stroke="#80a800" stroke-width="0.4" d="M304.4 417.3 330.2 418.4 327.2 421.7 301.2 420.4ZM301.2 420.4 327.2 421.7 324.1 424.9 298.0 423.5ZM298.0 423.5 324.1 424.9 321.1 428.2 294.9 426.6ZM294.9 426.6 321.1 428.2 318.0 431.5 291.7 429.6Z"/><path fill="#d8e000" stroke="#d8e000" stroke-width="0.4" d="M330.2 418.4 343.2 418.9 340.2 422.3 327.2 421.7ZM327.2 421.7 340.2 422.3 337.2 425.7 324.1 424.9ZM324.1 424.9 337.2 425.7 334.2 429.1 321.1 428.2ZM321.1 428.2 334.2 429.1 331.2 432.5 318.0 431.5ZM291.7 429.6 331.2 432.5 328.2 435.8 288.5 432.7ZM288.5 432.7 328.2 435.8 325.2 439.2 285.4 435.8ZM285.4 435.8 325.2 439.2 322.2 442.6 282.2 438.9ZM282.2 438.9 315.5 442.0 312.5 445.3 279.0 442.0Z"/><path fill="#f8e800" stroke="#f8e800" stroke-width="0.4" d="M343.2 418.9 356.1 419.5 353.1 422.9 340.2 422.3ZM340.2 422.3 353.1 422.9 350.2 426.4 337.2 425.7ZM337.2 425.7 350.2 426.4 347.3 429.9 334.2 429.1ZM334.2 429.1 347.3 429.9 344.3 433.4 331.2 432.5ZM331.2 432.5 344.3 433.4 341.4 436.9 328.2 435.8ZM328.2 435.8 341.4 436.9 338.4 440.4 325.2 439.2ZM325.2 439.2 338.4 440.4 335.5 443.8 322.2 442.6ZM315.5 442.0 328.8 443.2 325.9 446.7 312.5 445.3Z"/><path fill="#ffc800" stroke="#ffc800" stroke-width="0.4" d="M356.1 419.5 369.0 420.0 366.1 423.6 353.1 422.9ZM353.1 422.9 366.1 423.6 363.2 427.2 350.2 426.4ZM350.2 426.4 356.7 426.8 353.8 430.3 347.3 429.9ZM347.3 429.9 353.8 430.3 350.9 433.9 344.3 433.4ZM344.3 433.4 350.9 433.9 348.0 437.4 341.4 436.9ZM341.4 436.9 348.0 437.4 345.1 440.9 338.4 440.4ZM338.4 440.4 345.1 440.9 342.2 444.5 335.5 443.8ZM328.8 443.2 342.2 444.5 339.2 448.0 325.9 446.7Z"/><path fill="#ffa000" stroke="#ffa000" stroke-width="0.4" d="M369.0 420.0 375.5 420.3 372.6 423.9 366.1 423.6ZM366.1 423.6 372.6 423.9 369.8 427.5 363.2 427.2ZM356.7 426.8 369.8 427.5 366.9 431.2 353.8 430.3ZM353.8 430.3 366.9 431.2 364.1 434.8 350.9 433.9ZM350.9 433.9 364.1 434.8 361.2 438.4 348.0 437.4ZM348.0 437.4 361.2 438.4 358.3 442.1 345.1 440.9ZM345.1 440.9 358.3 442.1 355.5 445.7 342.2 444.5ZM342.2 444.5 348.8 445.1 345.9 448.7 339.2 448.0Z"/><path fill="#ff7000" stroke="#ff7000" stroke-width="0.4" d="M375.5 420.3 381.9 420.5 379.1 424.2 372.6 423.9ZM372.6 423.9 379.1 424.2 376.3 427.9 369.8 427.5ZM369.8 427.5 376.3 427.9 373.5 431.6 366.9 431.2ZM366.9 431.2 373.5 431.6 370.6 435.3 364.1 434.8ZM364.1 434.8 370.6 435.3 367.8 438.9 361.2 438.4ZM361.2 438.4 367.8 438.9 365.0 442.6 358.3 442.1ZM358.3 442.1 365.0 442.6 362.2 446.3 355.5 445.7ZM348.8 445.1 362.2 446.3 359.3 450.0 345.9 448.7Z"/><path fill="#ff4000" stroke="#ff4000" stroke-width="0.4" d="M381.9 420.5 394.9 421.1 392.1 424.9 379.1 424.2ZM379.1 424.2 392.1 424.9 389.3 428.6 376.3 427.9ZM376.3 427.9 389.3 428.6 386.6 432.4 373.5 431.6ZM373.5 431.6 380.0 432.0 377.2 435.7 370.6 435.3ZM370.6 435.3 377.2 435.7 374.4 439.5 367.8 438.9ZM367.8 438.9 374.4 439.5 371.6 443.2 365.0 442.6ZM365.0 442.6 371.6 443.2 368.8 446.9 362.2 446.3ZM362.2 446.3 368.8 446.9 366.0 450.7 359.3 450.0Z"/><path fill="#ff0000" stroke="#ff0000" stroke-width="0.4" d="M394.9 421.1 401.3 421.3 398.6 425.2 392.1 424.9ZM392.1 424.9 398.6 425.2 395.8 429.0 389.3 428.6ZM389.3 428.6 395.8 429.0 393.1 432.8 386.6 432.4ZM380.0 432.0 393.1 432.8 390.4 436.7 377.2 435.7ZM377.2 435.7 390.4 436.7 387.6 440.5 374.4 439.5ZM374.4 439.5 387.6 440.5 384.9 444.3 371.6 443.2ZM371.6 443.2 384.9 444.3 382.2 448.2 368.8 446.9ZM368.8 446.9 382.2 448.2 379.4 452.0 366.0 450.7Z"/><path fill="#d80000" stroke="#d80000" stroke-width="0.4" d="M401.3 421.3 414.2 421.9 411.6 425.8 398.6 425.2ZM398.6 425.2 411.6 425.8 408.9 429.7 395.8 429.0ZM395.8 429.0 408.9 429.7 406.2 433.7 393.1 432.8ZM393.1 432.8 406.2 433.7 403.5 437.6 390.4 436.7ZM390.4 436.7 403.5 437.6 400.8 441.5 387.6 440.5ZM387.6 440.5 400.8 441.5 398.2 445.5 384.9 444.3ZM384.9 444.3 398.2 445.5 395.5 449.4 382.2 448.2ZM382.2 448.2 395.5 449.4 392.8 453.3 379.4 452.0Z"/><path fill="#c00000" stroke="#c00000" stroke-width="0.4" d="M414.2 421.9 537.0 427.0 534.9 431.9 411.6 425.8ZM411.6 425.8 534.9 431.9 532.8 436.8 408.9 429.7ZM408.9 429.7 532.8 436.8 530.6 441.6 406.2 433.7ZM406.2 433.7 530.6 441.6 528.5 446.5 403.5 437.6ZM403.5 437.6 528.5 446.5 526.4 451.4 400.8 441.5ZM400.8 441.5 526.4 451.4 524.2 456.2 398.2 445.5ZM398.2 445.5 524.2 456.2 522.1 461.1 395.5 449.4ZM395.5 449.4 522.1 461.1 520.0 466.0 392.8 453.3Z"/><path fill="none" stroke="#111" stroke-width="0.9" d="M304.4 417.3L279.0 442.0M317.3 417.8L292.4 443.3M330.2 418.4L305.8 444.7M343.2 418.9L319.2 446.0M356.1 419.5L332.6 447.3M369.0 420.0L345.9 448.7M381.9 420.5L359.3 450.0M394.9 421.1L372.7 451.3M407.8 421.6L386.1 452.7M420.7 422.1L399.5 454.0M433.6 422.7L412.9 455.3M446.5 423.2L426.3 456.7M459.5 423.8L439.7 458.0M472.4 424.3L453.1 459.3M485.3 424.8L466.4 460.7M498.2 425.4L479.8 462.0M511.2 425.9L493.2 463.3M524.1 426.5L506.6 464.7M537.0 427.0L520.0 466.0M304.4 417.3L537.0 427.0M298.0 423.5L532.8 436.8M291.7 429.6L528.5 446.5M285.4 435.8L524.2 456.2M279.0 442.0L520.0 466.0"/><path fill="#80a800" stroke="#111" stroke-width="0.8" d="M846 716 L848 702 L860.7 709 L836 731 L822 742.8Z"/><path fill="#d80000" stroke="#d80000" stroke-width="0.4" d="M640.0 630.0 698.9 654.6 696.6 661.2 640.0 635.7ZM640.0 635.7 696.6 661.2 694.3 667.8 640.0 641.3ZM640.0 641.3 694.3 667.8 692.0 674.4 640.0 647.0Z"/><path fill="#ff4000" stroke="#ff4000" stroke-width="0.4" d="M698.9 654.6 728.3 666.9 724.9 673.9 696.6 661.2ZM696.6 661.2 724.9 673.9 721.4 681.0 694.3 667.8ZM694.3 667.8 721.4 681.0 718.0 688.1 692.0 674.4Z"/><path fill="#ffa000" stroke="#ffa000" stroke-width="0.4" d="M728.3 666.9 816.6 703.7 809.7 712.2 724.9 673.9Z"/><path fill="#f8e800" stroke="#f8e800" stroke-width="0.4" d="M816.6 703.7 846.0 716.0 838.0 724.9 809.7 712.2ZM757.6 698.6 793.8 716.2 787.3 724.6 752.7 706.3Z"/><path fill="#ffc800" stroke="#ffc800" stroke-width="0.4" d="M724.9 673.9 809.7 712.2 802.9 720.6 721.4 681.0ZM721.4 681.0 757.6 698.6 752.7 706.3 718.0 688.1ZM793.8 716.2 802.9 720.6 796.0 729.1 787.3 724.6Z"/><path fill="#80a800" stroke="#80a800" stroke-width="0.4" d="M809.7 712.2 838.0 724.9 830.0 733.9 802.9 720.6ZM802.9 720.6 830.0 733.9 822.0 742.8 796.0 729.1Z"/><path fill="none" stroke="#111" stroke-width="0.9" d="M640.0 630.0L640.0 647.0M649.8 634.1L648.7 651.6M659.6 638.2L657.3 656.1M669.4 642.3L666.0 660.7M679.2 646.4L674.7 665.2M689.0 650.5L683.3 669.8M698.9 654.6L692.0 674.4M708.7 658.7L700.7 678.9M718.5 662.8L709.3 683.5M728.3 666.9L718.0 688.1M738.1 671.0L726.7 692.6M747.9 675.0L735.3 697.2M757.7 679.1L744.0 701.7M767.5 683.2L752.7 706.3M777.3 687.3L761.3 710.9M787.1 691.4L770.0 715.4M797.0 695.5L778.7 720.0M806.8 699.6L787.3 724.6M816.6 703.7L796.0 729.1M826.4 707.8L804.7 733.7M836.2 711.9L813.3 738.2M846.0 716.0L822.0 742.8M640.0 630.0L846.0 716.0M640.0 635.7L838.0 724.9M640.0 641.3L830.0 733.9M640.0 647.0L822.0 742.8"/><path fill="#c00000" stroke="#c00000" stroke-width="0.4" d="M638.8 503.8 750.6 553.0 750.0 558.4 638.9 509.5ZM638.9 509.5 744.7 556.0 744.2 561.4 638.9 515.3ZM638.9 515.3 744.2 561.4 743.7 566.8 639.0 521.0ZM639.0 521.0 738.4 564.5 737.9 569.9 639.0 526.7ZM639.0 526.7 732.7 567.7 732.3 573.1 639.1 532.5ZM639.1 532.5 732.3 573.1 731.8 578.5 639.1 538.2ZM639.1 538.2 726.6 576.3 726.2 581.7 639.2 544.0ZM639.2 544.0 726.2 581.7 725.8 587.1 639.2 549.7ZM639.2 549.7 720.7 584.9 720.3 590.4 639.3 555.4ZM639.3 555.4 720.3 590.4 719.8 595.8 639.3 561.2ZM639.3 561.2 719.8 595.8 719.4 601.3 639.4 566.9ZM639.4 566.9 719.4 601.3 719.0 606.7 639.5 572.6ZM639.5 572.6 719.0 606.7 718.6 612.2 639.5 578.4ZM639.5 578.4 718.6 612.2 718.2 617.6 639.6 584.1ZM639.6 584.1 723.1 619.7 722.7 625.2 639.6 589.8ZM639.6 589.8 722.7 625.2 722.2 630.6 639.7 595.6ZM639.7 595.6 727.1 632.7 726.6 638.1 639.7 601.3ZM639.7 601.3 726.6 638.1 726.2 643.5 639.8 607.1ZM639.8 607.1 731.0 645.5 730.5 650.9 639.8 612.8ZM639.8 612.8 735.2 652.9 734.7 658.3 639.9 618.5ZM639.9 618.5 734.7 658.3 734.2 663.7 639.9 624.3ZM639.9 624.3 738.9 665.7 738.3 671.0 640.0 630.0Z"/><path fill="#ff0000" stroke="#ff0000" stroke-width="0.4" d="M750.6 553.0 782.5 567.1 781.8 572.3 750.0 558.4ZM744.7 556.0 776.5 570.0 775.8 575.3 744.2 561.4ZM744.2 561.4 770.5 573.0 769.8 578.3 743.7 566.8ZM738.4 564.5 769.8 578.3 769.2 583.6 737.9 569.9ZM732.7 567.7 764.0 581.3 763.3 586.6 732.3 573.1ZM732.3 573.1 758.1 584.3 757.5 589.7 731.8 578.5ZM726.6 576.3 757.5 589.7 756.9 595.0 726.2 581.7ZM726.2 581.7 751.8 592.8 751.2 598.1 725.8 587.1ZM720.7 584.9 751.2 598.1 750.6 603.5 720.3 590.4ZM720.3 590.4 750.6 603.5 750.0 608.8 719.8 595.8ZM719.8 595.8 750.0 608.8 749.5 614.2 719.4 601.3ZM719.4 601.3 749.5 614.2 748.9 619.5 719.0 606.7ZM719.0 606.7 748.9 619.5 748.3 624.9 718.6 612.2ZM718.6 612.2 748.3 624.9 747.7 630.2 718.2 617.6ZM723.1 619.7 747.7 630.2 747.1 635.6 722.7 625.2ZM722.7 625.2 752.0 637.6 751.4 643.0 722.2 630.6ZM727.1 632.7 751.4 643.0 750.8 648.3 726.6 638.1ZM726.6 638.1 755.6 650.3 754.9 655.7 726.2 643.5ZM731.0 645.5 759.7 657.7 759.1 663.0 730.5 650.9ZM735.2 652.9 759.1 663.0 758.4 668.3 734.7 658.3ZM734.7 658.3 744.2 662.3 743.6 667.7 734.2 663.7ZM738.9 665.7 743.6 667.7 743.0 673.0 738.3 671.0Z"/><path fill="#ff4000" stroke="#ff4000" stroke-width="0.4" d="M782.5 567.1 873.0 606.9 871.8 611.9 781.8 572.3ZM776.5 570.0 871.8 611.9 870.5 616.8 775.8 575.3ZM770.5 573.0 870.5 616.8 869.3 621.8 769.8 578.3ZM769.8 578.3 869.3 621.8 868.1 626.7 769.2 583.6ZM764.0 581.3 868.1 626.7 866.9 631.7 763.3 586.6ZM758.1 584.3 866.9 631.7 865.6 636.7 757.5 589.7ZM757.5 589.7 865.6 636.7 864.4 641.6 756.9 595.0ZM751.8 592.8 864.4 641.6 863.2 646.6 751.2 598.1ZM751.2 598.1 863.2 646.6 862.0 651.5 750.6 603.5ZM750.6 603.5 862.0 651.5 860.7 656.5 750.0 608.8ZM750.0 608.8 860.7 656.5 859.5 661.5 749.5 614.2ZM749.5 614.2 859.5 661.5 858.3 666.4 748.9 619.5ZM748.9 619.5 858.3 666.4 857.0 671.4 748.3 624.9ZM748.3 624.9 857.0 671.4 855.8 676.3 747.7 630.2ZM747.7 630.2 855.8 676.3 854.6 681.3 747.1 635.6ZM752.0 637.6 854.6 681.3 853.4 686.2 751.4 643.0ZM751.4 643.0 853.4 686.2 852.1 691.2 750.8 648.3ZM755.6 650.3 852.1 691.2 850.9 696.2 754.9 655.7ZM759.7 657.7 850.9 696.2 849.7 701.1 759.1 663.0ZM759.1 663.0 849.7 701.1 848.5 706.1 758.4 668.3Z"/><path fill="#ff7000" stroke="#ff7000" stroke-width="0.4" d="M744.2 662.3 848.5 706.1 847.2 711.0 743.6 667.7ZM743.6 667.7 847.2 711.0 846.0 716.0 743.0 673.0Z"/><path fill="none" stroke="#111" stroke-width="0.9" d="M638.8 503.8L640.0 630.0M649.4 508.5L649.4 633.9M660.1 513.2L658.7 637.8M670.7 517.9L668.1 641.7M681.4 522.5L677.5 645.6M692.0 527.2L686.8 649.5M702.7 531.9L696.2 653.5M713.3 536.6L705.5 657.4M724.0 541.3L714.9 661.3M734.6 546.0L724.3 665.2M745.3 550.7L733.6 669.1M755.9 555.4L743.0 673.0M766.5 560.0L752.4 676.9M777.2 564.7L761.7 680.8M787.8 569.4L771.1 684.7M798.5 574.1L780.5 688.6M809.1 578.8L789.8 692.5M819.8 583.5L799.2 696.5M830.4 588.2L808.5 700.4M841.1 592.8L817.9 704.3M851.7 597.5L827.3 708.2M862.4 602.2L836.6 712.1M873.0 606.9L846.0 716.0M638.8 503.8L873.0 606.9M638.9 515.3L870.5 616.8M639.0 526.7L868.1 626.7M639.1 538.2L865.6 636.7M639.2 549.7L863.2 646.6M639.3 561.2L860.7 656.5M639.5 572.6L858.3 666.4M639.6 584.1L855.8 676.3M639.7 595.6L853.4 686.2M639.8 607.1L850.9 696.2M639.9 618.5L848.5 706.1M640.0 630.0L846.0 716.0"/><path fill="#c00000" stroke="#c00000" stroke-width="0.4" d="M696.6 484.8 764.1 519.7 762.8 524.3 695.9 489.6ZM695.9 489.6 767.3 526.6 765.9 531.2 695.3 494.4ZM695.3 494.4 765.9 531.2 764.6 535.7 694.6 499.3ZM694.6 499.3 764.6 535.7 763.2 540.3 694.0 504.1ZM694.0 504.1 763.2 540.3 761.9 544.9 693.3 508.9ZM693.3 508.9 761.9 544.9 760.5 549.4 692.6 513.7ZM692.6 513.7 760.5 549.4 759.2 554.0 692.0 518.5ZM692.0 518.5 763.4 556.2 762.0 560.8 691.3 523.4ZM691.3 523.4 762.0 560.8 760.6 565.3 690.7 528.2ZM690.7 528.2 760.6 565.3 759.2 569.8 690.0 533.0Z"/><path fill="#d80000" stroke="#d80000" stroke-width="0.4" d="M764.1 519.7 782.1 529.0 780.6 533.5 762.8 524.3ZM767.3 526.6 780.6 533.5 779.2 538.1 765.9 531.2ZM765.9 531.2 779.2 538.1 777.7 542.6 764.6 535.7ZM764.6 535.7 777.7 542.6 776.2 547.1 763.2 540.3ZM763.2 540.3 776.2 547.1 774.7 551.6 761.9 544.9ZM761.9 544.9 774.7 551.6 773.3 556.1 760.5 549.4ZM760.5 549.4 777.5 558.4 776.0 562.9 759.2 554.0ZM763.4 556.2 776.0 562.9 774.5 567.4 762.0 560.8ZM762.0 560.8 774.5 567.4 773.0 571.9 760.6 565.3ZM760.6 565.3 773.0 571.9 771.5 576.4 759.2 569.8Z"/><path fill="#ff0000" stroke="#ff0000" stroke-width="0.4" d="M782.1 529.0 795.6 536.0 794.0 540.5 780.6 533.5ZM780.6 533.5 794.0 540.5 792.4 544.9 779.2 538.1ZM779.2 538.1 792.4 544.9 790.8 549.4 777.7 542.6ZM777.7 542.6 790.8 549.4 789.2 553.9 776.2 547.1ZM776.2 547.1 789.2 553.9 787.6 558.3 774.7 551.6ZM774.7 551.6 787.6 558.3 786.0 562.8 773.3 556.1ZM777.5 558.4 786.0 562.8 784.4 567.3 776.0 562.9ZM776.0 562.9 784.4 567.3 782.8 571.7 774.5 567.4ZM774.5 567.4 782.8 571.7 781.2 576.2 773.0 571.9ZM773.0 571.9 781.2 576.2 779.6 580.7 771.5 576.4Z"/><path fill="#ff4000" stroke="#ff4000" stroke-width="0.4" d="M795.6 536.0 804.6 540.7 802.9 545.1 794.0 540.5ZM794.0 540.5 802.9 545.1 801.2 549.5 792.4 544.9ZM792.4 544.9 801.2 549.5 799.5 554.0 790.8 549.4ZM790.8 549.4 799.5 554.0 797.9 558.4 789.2 553.9ZM789.2 553.9 797.9 558.4 796.2 562.8 787.6 558.3ZM787.6 558.3 796.2 562.8 794.5 567.3 786.0 562.8ZM786.0 562.8 794.5 567.3 792.8 571.7 784.4 567.3ZM784.4 567.3 797.0 573.9 795.3 578.3 782.8 571.7ZM782.8 571.7 795.3 578.3 793.5 582.8 781.2 576.2ZM781.2 576.2 793.5 582.8 791.8 587.2 779.6 580.7Z"/><path fill="#ff7000" stroke="#ff7000" stroke-width="0.4" d="M804.6 540.7 813.6 545.3 811.8 549.7 802.9 545.1ZM802.9 545.1 811.8 549.7 810.1 554.1 801.2 549.5ZM801.2 549.5 810.1 554.1 808.3 558.5 799.5 554.0ZM799.5 554.0 808.3 558.5 806.5 562.9 797.9 558.4ZM797.9 558.4 810.8 565.2 809.0 569.6 796.2 562.8ZM796.2 562.8 809.0 569.6 807.2 574.0 794.5 567.3ZM794.5 567.3 807.2 574.0 805.4 578.4 792.8 571.7ZM797.0 573.9 805.4 578.4 803.6 582.7 795.3 578.3ZM795.3 578.3 803.6 582.7 801.8 587.1 793.5 582.8ZM793.5 582.8 801.8 587.1 800.0 591.5 791.8 587.2Z"/><path fill="#ffa000" stroke="#ffa000" stroke-width="0.4" d="M813.6 545.3 827.1 552.3 825.2 556.7 811.8 549.7ZM811.8 549.7 825.2 556.7 823.3 561.0 810.1 554.1ZM810.1 554.1 823.3 561.0 821.4 565.4 808.3 558.5ZM808.3 558.5 821.4 565.4 819.5 569.7 806.5 562.9ZM810.8 565.2 819.5 569.7 817.6 574.1 809.0 569.6ZM809.0 569.6 817.6 574.1 815.7 578.4 807.2 574.0ZM807.2 574.0 815.7 578.4 813.8 582.8 805.4 578.4ZM805.4 578.4 813.8 582.8 811.9 587.1 803.6 582.7ZM803.6 582.7 811.9 587.1 810.0 591.5 801.8 587.1ZM801.8 587.1 810.0 591.5 808.1 595.9 800.0 591.5Z"/><path fill="#ffc800" stroke="#ffc800" stroke-width="0.4" d="M827.1 552.3 836.1 557.0 834.1 561.3 825.2 556.7ZM825.2 556.7 834.1 561.3 832.1 565.6 823.3 561.0ZM823.3 561.0 832.1 565.6 830.1 569.9 821.4 565.4ZM821.4 565.4 834.5 572.2 832.5 576.5 819.5 569.7ZM819.5 569.7 832.5 576.5 830.5 580.8 817.6 574.1ZM817.6 574.1 830.5 580.8 828.4 585.1 815.7 578.4ZM815.7 578.4 828.4 585.1 826.4 589.4 813.8 582.8ZM813.8 582.8 826.4 589.4 824.4 593.7 811.9 587.1ZM811.9 587.1 824.4 593.7 822.3 598.1 810.0 591.5ZM810.0 591.5 822.3 598.1 820.3 602.4 808.1 595.9Z"/><path fill="#f8e800" stroke="#f8e800" stroke-width="0.4" d="M836.1 557.0 854.1 566.3 851.9 570.5 834.1 561.3ZM834.1 561.3 851.9 570.5 849.8 574.8 832.1 565.6ZM832.1 565.6 849.8 574.8 847.6 579.0 830.1 569.9ZM834.5 572.2 847.6 579.0 845.5 583.3 832.5 576.5ZM832.5 576.5 845.5 583.3 843.3 587.6 830.5 580.8ZM830.5 580.8 847.6 589.8 845.4 594.1 828.4 585.1ZM828.4 585.1 845.4 594.1 843.2 598.3 826.4 589.4ZM826.4 589.4 843.2 598.3 841.0 602.5 824.4 593.7ZM824.4 593.7 841.0 602.5 838.8 606.8 822.3 598.1ZM822.3 598.1 842.9 609.0 840.7 613.2 820.3 602.4Z"/><path fill="#d8e000" stroke="#d8e000" stroke-width="0.4" d="M854.1 566.3 876.6 577.9 874.2 582.1 851.9 570.5ZM851.9 570.5 874.2 582.1 871.9 586.3 849.8 574.8ZM849.8 574.8 871.9 586.3 869.5 590.4 847.6 579.0ZM847.6 579.0 869.5 590.4 867.1 594.6 845.5 583.3ZM845.5 583.3 867.1 594.6 864.8 598.8 843.3 587.6ZM847.6 589.8 864.8 598.8 862.4 603.0 845.4 594.1ZM845.4 594.1 862.4 603.0 860.0 607.2 843.2 598.3ZM843.2 598.3 860.0 607.2 857.6 611.3 841.0 602.5ZM841.0 602.5 857.6 611.3 855.3 615.5 838.8 606.8ZM842.9 609.0 855.3 615.5 852.9 619.7 840.7 613.2Z"/><path fill="none" stroke="#111" stroke-width="0.9" d="M696.6 484.8L690.0 533.0M705.6 489.5L698.1 537.3M714.6 494.1L706.3 541.7M723.6 498.8L714.4 546.0M732.6 503.4L722.6 550.3M741.6 508.1L730.7 554.7M750.6 512.7L738.9 559.0M759.6 517.4L747.0 563.3M768.6 522.0L755.2 567.7M777.6 526.7L763.3 572.0M786.6 531.4L771.5 576.4M795.6 536.0L779.6 580.7M804.6 540.7L787.7 585.0M813.6 545.3L795.9 589.4M822.6 550.0L804.0 593.7M831.6 554.6L812.2 598.0M840.6 559.3L820.3 602.4M849.6 563.9L828.5 606.7M858.6 568.6L836.6 611.0M867.6 573.2L844.8 615.4M876.6 577.9L852.9 619.7M696.6 484.8L876.6 577.9M695.3 494.4L871.9 586.3M694.0 504.1L867.1 594.6M692.6 513.7L862.4 603.0M691.3 523.4L857.6 611.3M690.0 533.0L852.9 619.7"/><path fill="#98c040" stroke="#111" stroke-width="0.8" d="M876.6 577.9 L892.8 586.5 L873.8 604.5 L866 598Z"/><path fill="#c00000" d="M420 590 L506 586 L614 620 L660 628 L658 663 L438.6 604.8Z"/><path fill="#c00000" stroke="#c00000" stroke-width="0.4" d="M518.0 466.0 622.4 499.5 622.2 502.6 518.2 469.0ZM518.2 469.0 622.2 502.6 622.0 505.8 518.3 472.0ZM518.3 472.0 622.0 505.8 621.7 508.9 518.5 475.0ZM518.5 475.0 621.7 508.9 621.5 512.1 518.7 478.0ZM518.7 478.0 621.5 512.1 621.3 515.2 518.8 481.0ZM518.8 481.0 621.3 515.2 621.1 518.3 519.0 484.0ZM519.0 484.0 621.1 518.3 620.9 521.5 519.2 487.0ZM519.2 487.0 620.9 521.5 620.6 524.6 519.3 490.0ZM519.3 490.0 620.6 524.6 620.4 527.7 519.5 493.0ZM519.5 493.0 620.4 527.7 620.2 530.9 519.7 496.0ZM521.5 529.0 617.8 565.4 617.5 568.5 521.7 532.0ZM521.7 532.0 617.5 568.5 617.3 571.7 521.8 535.0ZM521.8 535.0 617.3 571.7 617.1 574.8 522.0 538.0ZM522.0 538.0 617.1 574.8 616.9 578.0 522.2 541.0ZM522.2 541.0 616.9 578.0 616.7 581.1 522.3 544.0ZM522.3 544.0 616.7 581.1 616.4 584.2 522.5 547.0ZM522.5 547.0 616.4 584.2 616.2 587.4 522.7 550.0ZM522.7 550.0 616.2 587.4 616.0 590.5 522.8 553.0ZM522.8 553.0 616.0 590.5 615.8 593.7 523.0 556.0ZM523.0 556.0 615.8 593.7 615.6 596.8 523.2 559.0ZM523.2 559.0 615.6 596.8 615.3 599.9 523.3 562.0ZM523.3 562.0 615.3 599.9 615.1 603.1 523.5 565.0ZM523.5 565.0 615.1 603.1 614.9 606.2 523.7 568.0ZM523.7 568.0 614.9 606.2 614.7 609.3 523.8 571.0ZM523.8 571.0 614.7 609.3 614.5 612.5 524.0 574.0ZM524.0 574.0 614.5 612.5 614.2 615.6 524.2 577.0ZM524.2 577.0 614.2 615.6 614.0 618.8 524.3 580.0ZM524.3 580.0 614.0 618.8 613.8 621.9 524.5 583.0Z"/><path fill="#d80000" stroke="#d80000" stroke-width="0.4" d="M519.7 496.0 620.2 530.9 620.0 534.0 519.8 499.0ZM521.3 526.0 618.0 562.3 617.8 565.4 521.5 529.0Z"/><path fill="#ff4000" stroke="#ff4000" stroke-width="0.4" d="M519.8 499.0 620.0 534.0 619.8 537.2 520.0 502.0ZM521.0 520.0 618.4 556.0 618.2 559.1 521.2 523.0Z"/><path fill="#ffa000" stroke="#ffa000" stroke-width="0.4" d="M520.0 502.0 619.8 537.2 619.5 540.3 520.2 505.0Z"/><path fill="#f8e800" stroke="#f8e800" stroke-width="0.4" d="M520.2 505.0 619.5 540.3 619.3 543.4 520.3 508.0Z"/><path fill="#80a800" stroke="#80a800" stroke-width="0.4" d="M520.3 508.0 619.3 543.4 619.1 546.6 520.5 511.0ZM520.5 511.0 619.1 546.6 618.9 549.7 520.7 514.0Z"/><path fill="#d8e000" stroke="#d8e000" stroke-width="0.4" d="M520.7 514.0 618.9 549.7 618.7 552.9 520.8 517.0Z"/><path fill="#ffc800" stroke="#ffc800" stroke-width="0.4" d="M520.8 517.0 618.7 552.9 618.4 556.0 521.0 520.0Z"/><path fill="#ff0000" stroke="#ff0000" stroke-width="0.4" d="M521.2 523.0 618.2 559.1 618.0 562.3 521.3 526.0Z"/><path fill="none" stroke="#111" stroke-width="0.9" d="M518.0 466.0L524.5 583.0M526.7 468.8L531.9 586.2M535.4 471.6L539.4 589.5M544.1 474.4L546.8 592.7M552.8 477.2L554.3 596.0M561.5 480.0L561.7 599.2M570.2 482.8L569.1 602.5M578.9 485.5L576.6 605.7M587.6 488.3L584.0 608.9M596.3 491.1L591.5 612.2M605.0 493.9L598.9 615.4M613.7 496.7L606.4 618.7M622.4 499.5L613.8 621.9M518.0 466.0L622.4 499.5M518.5 475.0L621.7 508.9M519.0 484.0L621.1 518.3M519.5 493.0L620.4 527.7M520.0 502.0L619.8 537.2M520.5 511.0L619.1 546.6M521.0 520.0L618.4 556.0M521.5 529.0L617.8 565.4M522.0 538.0L617.1 574.8M522.5 547.0L616.4 584.2M523.0 556.0L615.8 593.7M523.5 565.0L615.1 603.1M524.0 574.0L614.5 612.5M524.5 583.0L613.8 621.9"/><path fill="#c00000" stroke="#c00000" stroke-width="0.4" d="M537.0 427.2 570.0 433.0 568.0 441.4 533.6 435.0ZM533.6 435.0 568.0 441.4 566.0 449.8 530.2 442.7ZM530.2 442.7 566.0 449.8 564.0 458.2 526.8 450.5ZM526.8 450.5 564.0 458.2 562.0 466.6 523.4 458.2ZM523.4 458.2 562.0 466.6 560.0 475.0 520.0 466.0Z"/><path fill="none" stroke="#111" stroke-width="0.9" d="M537.0 427.2L520.0 466.0M548.0 429.1L533.3 469.0M559.0 431.1L546.7 472.0M570.0 433.0L560.0 475.0M537.0 427.2L570.0 433.0M533.6 435.0L568.0 441.4M530.2 442.7L566.0 449.8M526.8 450.5L564.0 458.2M523.4 458.2L562.0 466.6M520.0 466.0L560.0 475.0"/><path fill="#c00000" stroke="#c00000" stroke-width="0.4" d="M570.0 433.0 600.0 445.0 600.0 454.3 568.0 441.4ZM568.0 441.4 600.0 454.3 600.0 463.7 566.0 449.8ZM566.0 449.8 600.0 463.7 600.0 473.0 564.0 458.2ZM564.0 458.2 600.0 473.0 600.0 482.4 562.0 466.6ZM562.0 466.6 600.0 482.4 600.0 491.7 560.0 475.0Z"/><path fill="none" stroke="#111" stroke-width="0.9" d="M570.0 433.0L560.0 475.0M585.0 439.0L580.0 483.4M600.0 445.0L600.0 491.7M570.0 433.0L600.0 445.0M568.0 441.4L600.0 454.3M566.0 449.8L600.0 463.7M564.0 458.2L600.0 473.0M562.0 466.6L600.0 482.4M560.0 475.0L600.0 491.7"/><path fill="#c00000" stroke="#c00000" stroke-width="0.4" d="M600.0 445.0 630.0 452.5 630.0 462.6 600.0 454.3ZM600.0 454.3 630.0 462.6 630.0 472.7 600.0 463.7ZM600.0 463.7 630.0 472.7 630.0 482.8 600.0 473.0ZM600.0 473.0 630.0 482.8 630.0 492.9 600.0 482.4ZM600.0 482.4 630.0 492.9 630.0 503.0 600.0 491.7Z"/><path fill="none" stroke="#111" stroke-width="0.9" d="M600.0 445.0L600.0 491.7M615.0 448.8L615.0 497.4M630.0 452.5L630.0 503.0M600.0 445.0L630.0 452.5M600.0 454.3L630.0 462.6M600.0 463.7L630.0 472.7M600.0 473.0L630.0 482.8M600.0 482.4L630.0 492.9M600.0 491.7L630.0 503.0"/><path fill="#c00000" stroke="#c00000" stroke-width="0.4" d="M630.0 452.5 655.0 461.0 655.4 472.0 630.0 462.6ZM630.0 462.6 655.4 472.0 655.8 483.0 630.0 472.7ZM630.0 472.7 655.8 483.0 656.2 494.0 630.0 482.8ZM630.0 482.8 656.2 494.0 656.6 505.0 630.0 492.9ZM630.0 492.9 656.6 505.0 657.0 516.0 630.0 503.0Z"/><path fill="none" stroke="#111" stroke-width="0.9" d="M630.0 452.5L630.0 503.0M642.5 456.8L643.5 509.5M655.0 461.0L657.0 516.0M630.0 452.5L655.0 461.0M630.0 462.6L655.4 472.0M630.0 472.7L655.8 483.0M630.0 482.8L656.2 494.0M630.0 492.9L656.6 505.0M630.0 503.0L657.0 516.0"/><path fill="#c00000" stroke="#c00000" stroke-width="0.4" d="M655.0 461.0 675.0 472.0 675.0 482.6 655.4 472.0ZM655.4 472.0 675.0 482.6 675.0 493.2 655.8 483.0ZM655.8 483.0 675.0 493.2 675.0 503.8 656.2 494.0ZM656.2 494.0 675.0 503.8 675.0 514.4 656.6 505.0ZM656.6 505.0 675.0 514.4 675.0 525.0 657.0 516.0Z"/><path fill="none" stroke="#111" stroke-width="0.9" d="M655.0 461.0L657.0 516.0M665.0 466.5L666.0 520.5M675.0 472.0L675.0 525.0M655.0 461.0L675.0 472.0M655.4 472.0L675.0 482.6M655.8 483.0L675.0 493.2M656.2 494.0L675.0 503.8M656.6 505.0L675.0 514.4M657.0 516.0L675.0 525.0"/><path fill="#c00000" stroke="#c00000" stroke-width="0.4" d="M675.0 472.0 696.6 484.8 695.3 494.4 675.0 482.6ZM675.0 482.6 695.3 494.4 694.0 504.1 675.0 493.2ZM675.0 493.2 694.0 504.1 692.6 513.7 675.0 503.8ZM675.0 503.8 692.6 513.7 691.3 523.4 675.0 514.4ZM675.0 514.4 691.3 523.4 690.0 533.0 675.0 525.0Z"/><path fill="none" stroke="#111" stroke-width="0.9" d="M675.0 472.0L675.0 525.0M685.8 478.4L682.5 529.0M696.6 484.8L690.0 533.0M675.0 472.0L696.6 484.8M675.0 482.6L695.3 494.4M675.0 493.2L694.0 504.1M675.0 503.8L692.6 513.7M675.0 514.4L691.3 523.4M675.0 525.0L690.0 533.0"/><path fill="#ffa000" stroke="#ffa000" stroke-width="0.4" d="M498.6 463.0 518.3 466.0 518.5 470.4 498.9 467.9ZM498.9 467.9 513.6 469.8 513.9 474.4 499.2 472.9Z"/><path fill="#ffc800" stroke="#ffc800" stroke-width="0.4" d="M513.6 469.8 518.5 470.4 518.8 474.8 513.9 474.4Z"/><path fill="#80a800" stroke="#80a800" stroke-width="0.4" d="M499.2 472.9 518.8 474.8 519.0 479.3 499.6 477.8ZM499.6 477.8 509.3 478.5 509.6 483.2 499.9 482.8ZM505.6 571.6 514.6 567.5 514.9 572.2 505.9 576.6ZM505.9 576.6 523.8 567.7 524.0 572.2 506.3 581.5ZM519.6 574.5 524.0 572.2 524.3 576.6 519.8 579.0Z"/><path fill="#207000" stroke="#207000" stroke-width="0.4" d="M509.3 478.5 519.0 479.3 519.3 483.7 509.6 483.2ZM499.9 482.8 514.4 483.5 514.7 488.0 500.2 487.7ZM500.2 487.7 509.8 487.9 510.1 492.6 500.5 492.6ZM505.0 561.8 514.0 558.1 514.3 562.8 505.3 566.7ZM505.3 566.7 518.8 560.8 519.1 565.4 505.6 571.6ZM514.6 567.5 523.5 563.3 523.8 567.7 514.9 572.2Z"/><path fill="#008040" stroke="#008040" stroke-width="0.4" d="M514.4 483.5 519.3 483.7 519.5 488.1 514.7 488.0ZM509.8 487.9 519.5 488.1 519.7 492.5 510.1 492.6ZM500.5 492.6 514.9 492.6 515.2 497.1 500.8 497.6ZM500.8 497.6 510.4 497.3 510.7 501.9 501.2 502.5ZM501.2 502.5 505.9 502.2 506.2 507.0 501.5 507.4ZM501.5 507.4 506.2 507.0 506.5 511.8 501.8 512.4ZM503.7 542.0 508.3 540.7 508.6 545.5 504.0 547.0ZM504.0 547.0 508.6 545.5 508.9 550.3 504.3 551.9ZM504.3 551.9 513.5 548.8 513.7 553.4 504.7 556.8ZM504.7 556.8 518.3 551.7 518.5 556.3 505.0 561.8ZM514.0 558.1 523.1 554.5 523.3 558.9 514.3 562.8ZM518.8 560.8 523.3 558.9 523.5 563.3 519.1 565.4Z"/><path fill="#00b890" stroke="#00b890" stroke-width="0.4" d="M514.9 492.6 519.7 492.5 520.0 497.0 515.2 497.1ZM510.4 497.3 520.0 497.0 520.2 501.4 510.7 501.9ZM505.9 502.2 520.2 501.4 520.4 505.8 506.2 507.0ZM506.2 507.0 515.7 506.2 516.0 510.8 506.5 511.8ZM501.8 512.4 511.2 511.3 511.5 516.0 502.1 517.3ZM502.1 517.3 511.5 516.0 511.8 520.7 502.4 522.3ZM502.4 522.3 511.8 520.7 512.1 525.4 502.8 527.2ZM502.8 527.2 512.1 525.4 512.4 530.0 503.1 532.1ZM503.1 532.1 512.4 530.0 512.6 534.7 503.4 537.1ZM503.4 537.1 512.6 534.7 512.9 539.4 503.7 542.0ZM508.3 540.7 517.5 538.1 517.8 542.6 508.6 545.5ZM508.6 545.5 522.4 541.2 522.6 545.6 508.9 550.3ZM513.5 548.8 522.6 545.6 522.8 550.0 513.7 553.4ZM518.3 551.7 522.8 550.0 523.1 554.5 518.5 556.3Z"/><path fill="#00e8e0" stroke="#00e8e0" stroke-width="0.4" d="M515.7 506.2 520.4 505.8 520.7 510.2 516.0 510.8ZM511.2 511.3 520.7 510.2 520.9 514.7 511.5 516.0ZM511.5 516.0 520.9 514.7 521.2 519.1 511.8 520.7ZM511.8 520.7 521.2 519.1 521.4 523.5 512.1 525.4ZM512.1 525.4 521.4 523.5 521.6 527.9 512.4 530.0ZM512.4 530.0 521.6 527.9 521.9 532.3 512.6 534.7ZM512.6 534.7 521.9 532.3 522.1 536.8 512.9 539.4ZM517.5 538.1 522.1 536.8 522.4 541.2 517.8 542.6Z"/><path fill="#d8e000" stroke="#d8e000" stroke-width="0.4" d="M506.3 581.5 519.6 574.5 519.8 579.0 506.6 586.5ZM506.6 586.5 524.3 576.6 524.5 581.0 506.9 591.4Z"/><path fill="none" stroke="#111" stroke-width="0.9" d="M498.6 463.0L506.9 591.4M508.4 464.5L515.7 586.2M518.3 466.0L524.5 581.0M498.6 463.0L518.3 466.0M499.2 472.9L518.8 474.8M499.9 482.8L519.3 483.7M500.5 492.6L519.7 492.5M501.2 502.5L520.2 501.4M501.8 512.4L520.7 510.2M502.4 522.3L521.2 519.1M503.1 532.1L521.6 527.9M503.7 542.0L522.1 536.8M504.3 551.9L522.6 545.6M505.0 561.8L523.1 554.5M505.6 571.6L523.5 563.3M506.3 581.5L524.0 572.2M506.9 591.4L524.5 581.0"/><path fill="#0000ff" stroke="#0000ff" stroke-width="0.4" d="M519.0 468.0 524.0 470.0 524.6 478.3 519.7 476.7ZM519.7 476.7 524.6 478.3 525.2 486.7 520.3 485.3ZM521.0 494.0 525.8 495.0 526.3 503.3 521.7 502.7ZM522.3 511.3 526.9 511.7 527.5 520.0 523.0 520.0ZM524.3 537.3 528.7 536.7 529.2 545.0 525.0 546.0Z"/><path fill="#00c0ff" stroke="#00c0ff" stroke-width="0.4" d="M520.3 485.3 525.2 486.7 525.8 495.0 521.0 494.0ZM523.0 520.0 527.5 520.0 528.1 528.3 523.7 528.7ZM525.0 546.0 529.2 545.0 529.8 553.3 525.7 554.7Z"/><path fill="#0070ff" stroke="#0070ff" stroke-width="0.4" d="M521.7 502.7 526.3 503.3 526.9 511.7 522.3 511.3Z"/><path fill="#00e8e0" stroke="#00e8e0" stroke-width="0.4" d="M523.7 528.7 528.1 528.3 528.7 536.7 524.3 537.3ZM525.7 554.7 529.8 553.3 530.4 561.7 526.3 563.3ZM526.3 563.3 530.4 561.7 531.0 570.0 527.0 572.0Z"/><path fill="none" stroke="#111" stroke-width="0.6" d="M519.0 468.0L527.0 572.0M524.0 470.0L531.0 570.0M519.0 468.0L524.0 470.0M519.7 476.7L524.6 478.3M520.3 485.3L525.2 486.7M521.0 494.0L525.8 495.0M521.7 502.7L526.3 503.3M522.3 511.3L526.9 511.7M523.0 520.0L527.5 520.0M523.7 528.7L528.1 528.3M524.3 537.3L528.7 536.7M525.0 546.0L529.2 545.0M525.7 554.7L529.8 553.3M526.3 563.3L530.4 561.7M527.0 572.0L531.0 570.0"/><path fill="#ffa000" stroke="#ffa000" stroke-width="0.4" d="M622.4 499.5 638.8 503.8 638.5 507.9 622.1 504.2ZM622.1 504.2 634.4 507.0 634.1 511.3 621.7 508.9Z"/><path fill="#ffc800" stroke="#ffc800" stroke-width="0.4" d="M634.4 507.0 638.5 507.9 638.3 512.1 634.1 511.3Z"/><path fill="#80a800" stroke="#80a800" stroke-width="0.4" d="M621.7 508.9 638.3 512.1 638.0 516.2 621.4 513.6ZM621.4 513.6 629.7 514.9 629.4 519.4 621.1 518.3ZM615.1 603.1 624.0 599.0 623.7 603.5 614.8 607.8ZM614.8 607.8 632.7 599.2 632.4 603.3 614.5 612.5ZM627.9 605.6 632.4 603.3 632.2 607.5 627.7 609.9Z"/><path fill="#207000" stroke="#207000" stroke-width="0.4" d="M629.7 514.9 638.0 516.2 637.7 520.4 629.4 519.4ZM621.1 518.3 633.6 519.9 633.3 524.2 620.7 523.0ZM620.7 523.0 629.1 523.8 628.8 528.2 620.4 527.7ZM615.8 593.7 624.6 590.2 624.3 594.6 615.5 598.4ZM615.5 598.4 628.8 592.7 628.5 597.0 615.1 603.1ZM624.0 599.0 633.0 595.0 632.7 599.2 623.7 603.5Z"/><path fill="#008040" stroke="#008040" stroke-width="0.4" d="M633.6 519.9 637.7 520.4 637.5 524.5 633.3 524.2ZM629.1 523.8 637.5 524.5 637.2 528.7 628.8 528.2ZM620.4 527.7 633.0 528.4 632.7 532.7 620.1 532.5ZM620.1 532.5 628.5 532.6 628.2 537.1 619.8 537.2ZM619.8 537.2 624.0 537.1 623.7 541.7 619.4 541.9ZM619.4 541.9 623.7 541.7 623.4 546.2 619.1 546.6ZM617.1 574.8 621.5 573.7 621.2 578.2 616.8 579.5ZM616.8 579.5 621.2 578.2 620.8 582.8 616.4 584.2ZM616.4 584.2 625.2 581.3 624.9 585.8 616.1 588.9ZM616.1 588.9 629.3 584.2 629.1 588.5 615.8 593.7ZM624.6 590.2 633.5 586.7 633.2 590.9 624.3 594.6ZM628.8 592.7 633.2 590.9 633.0 595.0 628.5 597.0Z"/><path fill="#00b890" stroke="#00b890" stroke-width="0.4" d="M633.0 528.4 637.2 528.7 636.9 532.8 632.7 532.7ZM628.5 532.6 636.9 532.8 636.7 537.0 628.2 537.1ZM624.0 537.1 636.7 537.0 636.4 541.1 623.7 541.7ZM623.7 541.7 632.2 541.3 631.9 545.6 623.4 546.2ZM619.1 546.6 627.6 545.9 627.3 550.3 618.8 551.3ZM618.8 551.3 627.3 550.3 627.0 554.8 618.4 556.0ZM618.4 556.0 627.0 554.8 626.7 559.2 618.1 560.7ZM618.1 560.7 626.7 559.2 626.4 563.6 617.8 565.4ZM617.8 565.4 626.4 563.6 626.1 568.1 617.4 570.1ZM617.4 570.1 626.1 568.1 625.8 572.5 617.1 574.8ZM621.5 573.7 630.2 571.3 629.9 575.6 621.2 578.2ZM621.2 578.2 634.3 574.3 634.0 578.4 620.8 582.8ZM625.2 581.3 634.0 578.4 633.8 582.6 624.9 585.8ZM629.3 584.2 633.8 582.6 633.5 586.7 629.1 588.5Z"/><path fill="#00e8e0" stroke="#00e8e0" stroke-width="0.4" d="M632.2 541.3 636.4 541.1 636.1 545.3 631.9 545.6ZM627.6 545.9 636.1 545.3 635.9 549.4 627.3 550.3ZM627.3 550.3 635.9 549.4 635.6 553.6 627.0 554.8ZM627.0 554.8 635.6 553.6 635.3 557.7 626.7 559.2ZM626.7 559.2 635.3 557.7 635.1 561.8 626.4 563.6ZM626.4 563.6 635.1 561.8 634.8 566.0 626.1 568.1ZM626.1 568.1 634.8 566.0 634.6 570.1 625.8 572.5ZM630.2 571.3 634.6 570.1 634.3 574.3 629.9 575.6Z"/><path fill="#d8e000" stroke="#d8e000" stroke-width="0.4" d="M614.5 612.5 627.9 605.6 627.7 609.9 614.1 617.2ZM614.1 617.2 632.2 607.5 631.9 611.6 613.8 621.9Z"/><path fill="none" stroke="#111" stroke-width="0.9" d="M622.4 499.5L613.8 621.9M630.6 501.6L622.8 616.8M638.8 503.8L631.9 611.6M622.4 499.5L638.8 503.8M621.7 508.9L638.3 512.1M621.1 518.3L637.7 520.4M620.4 527.7L637.2 528.7M619.8 537.2L636.7 537.0M619.1 546.6L636.1 545.3M618.4 556.0L635.6 553.6M617.8 565.4L635.1 561.8M617.1 574.8L634.6 570.1M616.4 584.2L634.0 578.4M615.8 593.7L633.5 586.7M615.1 603.1L633.0 595.0M614.5 612.5L632.4 603.3M613.8 621.9L631.9 611.6"/><path fill="#1a0ad8" stroke="#1a0ad8" stroke-width="0.4" d="M639.0 505.0 645.0 507.0 644.7 514.8 638.8 513.1Z"/><path fill="#0000ff" stroke="#0000ff" stroke-width="0.4" d="M638.8 513.1 644.7 514.8 644.3 522.5 638.5 521.2ZM638.2 529.2 644.0 530.2 643.7 538.0 638.0 537.3ZM638.0 537.3 643.7 538.0 643.3 545.8 637.8 545.4ZM637.5 553.5 643.0 553.5 642.7 561.2 637.2 561.6ZM637.0 569.7 642.3 569.0 642.0 576.8 636.8 577.8Z"/><path fill="#00e8e0" stroke="#00e8e0" stroke-width="0.4" d="M638.5 521.2 644.3 522.5 644.0 530.2 638.2 529.2ZM636.8 577.8 642.0 576.8 641.7 584.5 636.5 585.8ZM636.5 585.8 641.7 584.5 641.3 592.2 636.2 593.9Z"/><path fill="#0070ff" stroke="#0070ff" stroke-width="0.4" d="M637.8 545.4 643.3 545.8 643.0 553.5 637.5 553.5Z"/><path fill="#00c0ff" stroke="#00c0ff" stroke-width="0.4" d="M637.2 561.6 642.7 561.2 642.3 569.0 637.0 569.7ZM636.2 593.9 641.3 592.2 641.0 600.0 636.0 602.0Z"/><path fill="none" stroke="#111" stroke-width="0.6" d="M639.0 505.0L636.0 602.0M645.0 507.0L641.0 600.0M639.0 505.0L645.0 507.0M638.8 513.1L644.7 514.8M638.5 521.2L644.3 522.5M638.2 529.2L644.0 530.2M638.0 537.3L643.7 538.0M637.8 545.4L643.3 545.8M637.5 553.5L643.0 553.5M637.2 561.6L642.7 561.2M637.0 569.7L642.3 569.0M636.8 577.8L642.0 576.8M636.5 585.8L641.7 584.5M636.2 593.9L641.3 592.2M636.0 602.0L641.0 600.0"/><path fill="#c00000" stroke="#c00000" stroke-width="0.4" d="M470.0 583.0 640.0 628.0 650.0 641.5 461.0 589.0ZM461.0 589.0 650.0 641.5 660.0 655.0 452.0 595.0Z"/><path fill="none" stroke="#111" stroke-width="0.9" d="M470.0 583.0L452.0 595.0M481.3 586.0L465.9 599.0M492.7 589.0L479.7 603.0M504.0 592.0L493.6 607.0M515.3 595.0L507.5 611.0M526.7 598.0L521.3 615.0M538.0 601.0L535.2 619.0M549.3 604.0L549.1 623.0M560.7 607.0L562.9 627.0M572.0 610.0L576.8 631.0M583.3 613.0L590.7 635.0M594.7 616.0L604.5 639.0M606.0 619.0L618.4 643.0M617.3 622.0L632.3 647.0M628.7 625.0L646.1 651.0M640.0 628.0L660.0 655.0M470.0 583.0L640.0 628.0M461.0 589.0L650.0 641.5M452.0 595.0L660.0 655.0"/><path fill="none" stroke="#111" stroke-width="0.7" d="M496.0 586.0 493.4 589.2 487.0 590.5 480.6 589.2 478.0 586.0 480.6 582.8 487.0 581.5 493.4 582.8ZM502.0 586.0 500.9 588.9 497.6 591.3 492.7 592.9 487.0 593.5 481.3 592.9 476.4 591.3 473.1 588.9 472.0 586.0 473.1 583.1 476.4 580.7 481.3 579.1 487.0 578.5 492.7 579.1 497.6 580.7 500.9 583.1ZM490.0 586.0L502.0 586.0M489.1 587.1L497.6 591.3M487.0 587.5L487.0 593.5M484.9 587.1L476.4 591.3M484.0 586.0L472.0 586.0M484.9 584.9L476.4 580.7M487.0 584.5L487.0 578.5M489.1 584.9L497.6 580.7"/><path fill="none" stroke="#111" stroke-width="0.7" d="M657.0 636.0 654.4 639.2 648.0 640.5 641.6 639.2 639.0 636.0 641.6 632.8 648.0 631.5 654.4 632.8ZM663.0 636.0 661.9 638.9 658.6 641.3 653.7 642.9 648.0 643.5 642.3 642.9 637.4 641.3 634.1 638.9 633.0 636.0 634.1 633.1 637.4 630.7 642.3 629.1 648.0 628.5 653.7 629.1 658.6 630.7 661.9 633.1ZM651.0 636.0L663.0 636.0M650.1 637.1L658.6 641.3M648.0 637.5L648.0 643.5M645.9 637.1L637.4 641.3M645.0 636.0L633.0 636.0M645.9 634.9L637.4 630.7M648.0 634.5L648.0 628.5M650.1 634.9L658.6 630.7"/><path fill="#008040" stroke="#008040" stroke-width="0.4" d="M452.0 595.0 455.8 595.2 453.6 597.0 449.8 596.7ZM449.8 596.7 453.6 597.0 451.4 598.8 447.6 598.4ZM447.6 598.4 451.4 598.8 449.2 600.7 445.4 600.1ZM445.4 600.1 449.2 600.7 447.1 602.5 443.2 601.8ZM443.2 601.8 447.1 602.5 444.9 604.3 441.0 603.5ZM441.0 603.5 444.9 604.3 442.8 606.2 438.8 605.2Z"/><path fill="#80a800" stroke="#80a800" stroke-width="0.4" d="M455.8 595.2 459.5 595.3 457.4 597.3 453.6 597.0ZM508.2 597.3 512.0 597.5 510.3 601.3 506.6 601.0ZM453.6 597.0 457.4 597.3 455.2 599.2 451.4 598.8ZM506.6 601.0 510.3 601.3 508.7 605.2 504.9 604.7ZM451.4 598.8 455.2 599.2 453.1 601.2 449.2 600.7ZM504.9 604.7 508.7 605.2 507.0 609.0 503.1 608.4ZM449.2 600.7 453.1 601.2 451.0 603.2 447.1 602.5ZM503.1 608.4 507.0 609.0 505.3 612.8 501.5 612.1ZM447.1 602.5 451.0 603.2 448.8 605.1 444.9 604.3ZM501.5 612.1 505.3 612.8 503.7 616.7 499.8 615.8ZM444.9 604.3 448.8 605.1 446.7 607.1 442.8 606.2ZM499.8 615.8 503.7 616.7 502.0 620.5 498.1 619.5Z"/><path fill="#d8e000" stroke="#d8e000" stroke-width="0.4" d="M459.5 595.3 463.2 595.5 461.2 597.6 457.4 597.3ZM504.5 597.2 508.2 597.3 506.6 601.0 502.8 600.8ZM457.4 597.3 461.2 597.6 459.1 599.7 455.2 599.2ZM502.8 600.8 506.6 601.0 504.9 604.7 501.0 604.3ZM455.2 599.2 459.1 599.7 457.0 601.8 453.1 601.2ZM501.0 604.3 504.9 604.7 503.1 608.4 499.3 607.9ZM453.1 601.2 457.0 601.8 454.9 603.9 451.0 603.2ZM499.3 607.9 503.1 608.4 501.5 612.1 497.6 611.5ZM451.0 603.2 454.9 603.9 452.8 606.0 448.8 605.1ZM497.6 611.5 501.5 612.1 499.8 615.8 495.8 615.0ZM448.8 605.1 452.8 606.0 450.7 608.1 446.7 607.1ZM495.8 615.0 499.8 615.8 498.1 619.5 494.1 618.6Z"/><path fill="#f8e800" stroke="#f8e800" stroke-width="0.4" d="M463.2 595.5 467.0 595.6 464.9 597.9 461.2 597.6ZM461.2 597.6 464.9 597.9 462.9 600.1 459.1 599.7ZM459.1 599.7 462.9 600.1 460.8 602.3 457.0 601.8ZM497.2 603.9 501.0 604.3 499.3 607.9 495.4 607.3ZM457.0 601.8 460.8 602.3 458.7 604.6 454.9 603.9ZM495.4 607.3 499.3 607.9 497.6 611.5 493.7 610.8ZM454.9 603.9 458.7 604.6 456.7 606.8 452.8 606.0ZM493.7 610.8 497.6 611.5 495.8 615.0 491.9 614.2ZM452.8 606.0 456.7 606.8 454.6 609.0 450.7 608.1ZM491.9 614.2 495.8 615.0 494.1 618.6 490.1 617.6Z"/><path fill="#ffc800" stroke="#ffc800" stroke-width="0.4" d="M467.0 595.6 470.8 595.8 468.7 598.1 464.9 597.9ZM500.8 597.0 504.5 597.2 502.8 600.8 499.0 600.5ZM464.9 597.9 468.7 598.1 466.7 600.5 462.9 600.1ZM499.0 600.5 502.8 600.8 501.0 604.3 497.2 603.9ZM462.9 600.1 466.7 600.5 464.6 602.9 460.8 602.3ZM493.4 603.5 497.2 603.9 495.4 607.3 491.6 606.8ZM460.8 602.3 464.6 602.9 462.6 605.2 458.7 604.6ZM491.6 606.8 495.4 607.3 493.7 610.8 489.8 610.1ZM458.7 604.6 462.6 605.2 460.6 607.6 456.7 606.8ZM489.8 610.1 493.7 610.8 491.9 614.2 488.0 613.4ZM456.7 606.8 460.6 607.6 458.6 610.0 454.6 609.0ZM488.0 613.4 491.9 614.2 490.1 617.6 486.2 616.7Z"/><path fill="#ffa000" stroke="#ffa000" stroke-width="0.4" d="M470.8 595.8 474.5 595.9 472.5 598.4 468.7 598.1ZM497.0 596.9 500.8 597.0 499.0 600.5 495.2 600.2ZM468.7 598.1 472.5 598.4 470.5 600.9 466.7 600.5ZM495.2 600.2 499.0 600.5 497.2 603.9 493.4 603.5ZM466.7 600.5 470.5 600.9 468.5 603.4 464.6 602.9ZM489.6 603.1 493.4 603.5 491.6 606.8 487.8 606.2ZM464.6 602.9 468.5 603.4 466.5 605.9 462.6 605.2ZM487.8 606.2 491.6 606.8 489.8 610.1 485.9 609.4ZM462.6 605.2 466.5 605.9 464.5 608.4 460.6 607.6ZM485.9 609.4 489.8 610.1 488.0 613.4 484.1 612.6ZM460.6 607.6 464.5 608.4 462.5 610.9 458.6 610.0ZM484.1 612.6 488.0 613.4 486.2 616.7 482.2 615.7Z"/><path fill="#ff4000" stroke="#ff4000" stroke-width="0.4" d="M474.5 595.9 478.2 596.1 476.3 598.7 472.5 598.4ZM489.5 596.6 493.2 596.7 491.4 599.9 487.6 599.6ZM472.5 598.4 476.3 598.7 474.3 601.4 470.5 600.9ZM487.6 599.6 491.4 599.9 489.6 603.1 485.8 602.6ZM474.3 601.4 485.8 602.6 483.9 605.7 472.4 604.0ZM472.4 604.0 483.9 605.7 482.0 608.7 470.4 606.6ZM470.4 606.6 482.0 608.7 480.2 611.7 468.4 609.3ZM468.4 609.3 480.2 611.7 478.3 614.8 466.5 611.9Z"/><path fill="#ff0000" stroke="#ff0000" stroke-width="0.4" d="M478.2 596.1 482.0 596.2 480.1 599.0 476.3 598.7ZM485.8 596.4 489.5 596.6 487.6 599.6 483.9 599.3ZM476.3 598.7 480.1 599.0 478.1 601.8 474.3 601.4ZM483.9 599.3 487.6 599.6 485.8 602.6 482.0 602.2Z"/><path fill="#d80000" stroke="#d80000" stroke-width="0.4" d="M482.0 596.2 485.8 596.4 483.9 599.3 480.1 599.0ZM480.1 599.0 483.9 599.3 482.0 602.2 478.1 601.8Z"/><path fill="#ff7000" stroke="#ff7000" stroke-width="0.4" d="M493.2 596.7 497.0 596.9 495.2 600.2 491.4 599.9ZM491.4 599.9 495.2 600.2 493.4 603.5 489.6 603.1ZM470.5 600.9 474.3 601.4 472.4 604.0 468.5 603.4ZM485.8 602.6 489.6 603.1 487.8 606.2 483.9 605.7ZM468.5 603.4 472.4 604.0 470.4 606.6 466.5 605.9ZM483.9 605.7 487.8 606.2 485.9 609.4 482.0 608.7ZM466.5 605.9 470.4 606.6 468.4 609.3 464.5 608.4ZM482.0 608.7 485.9 609.4 484.1 612.6 480.2 611.7ZM464.5 608.4 468.4 609.3 466.5 611.9 462.5 610.9ZM480.2 611.7 484.1 612.6 482.2 615.7 478.3 614.8Z"/><path fill="none" stroke="#111" stroke-width="0.9" d="M452.0 595.0L438.8 605.2M459.5 595.3L446.7 607.1M467.0 595.6L454.6 609.0M474.5 595.9L462.5 610.9M482.0 596.2L470.4 612.9M489.5 596.6L478.3 614.8M497.0 596.9L486.2 616.7M504.5 597.2L494.1 618.6M512.0 597.5L502.0 620.5M452.0 595.0L512.0 597.5M447.6 598.4L508.7 605.2M443.2 601.8L505.3 612.8M438.8 605.2L502.0 620.5"/><path fill="#207000" stroke="#207000" stroke-width="0.4" d="M512.0 597.5 516.0 598.7 514.4 602.5 510.3 601.3ZM510.3 601.3 514.4 602.5 512.8 606.4 508.7 605.2ZM508.7 605.2 512.8 606.4 511.2 610.2 507.0 609.0ZM507.0 609.0 511.2 610.2 509.6 614.1 505.3 612.8ZM505.3 612.8 509.6 614.1 508.0 617.9 503.7 616.7ZM503.7 616.7 508.0 617.9 506.4 621.8 502.0 620.5Z"/><path fill="#008040" stroke="#008040" stroke-width="0.4" d="M516.0 598.7 520.0 599.8 518.5 603.7 514.4 602.5ZM514.4 602.5 518.5 603.7 516.9 607.6 512.8 606.4ZM512.8 606.4 516.9 607.6 515.4 611.5 511.2 610.2ZM511.2 610.2 515.4 611.5 513.8 615.3 509.6 614.1ZM509.6 614.1 513.8 615.3 512.3 619.2 508.0 617.9ZM508.0 617.9 512.3 619.2 510.7 623.1 506.4 621.8Z"/><path fill="#00b890" stroke="#00b890" stroke-width="0.4" d="M520.0 599.8 524.0 601.0 522.5 604.9 518.5 603.7ZM518.5 603.7 522.5 604.9 521.0 608.8 516.9 607.6ZM516.9 607.6 521.0 608.8 519.5 612.7 515.4 611.5ZM515.4 611.5 519.5 612.7 518.1 616.6 513.8 615.3ZM513.8 615.3 518.1 616.6 516.6 620.5 512.3 619.2ZM512.3 619.2 516.6 620.5 515.1 624.4 510.7 623.1Z"/><path fill="#00e8e0" stroke="#00e8e0" stroke-width="0.4" d="M524.0 601.0 532.0 603.3 530.6 607.2 522.5 604.9ZM522.5 604.9 530.6 607.2 529.3 611.2 521.0 608.8ZM521.0 608.8 529.3 611.2 527.9 615.1 519.5 612.7ZM519.5 612.7 527.9 615.1 526.5 619.1 518.1 616.6ZM518.1 616.6 526.5 619.1 525.2 623.0 516.6 620.5ZM516.6 620.5 525.2 623.0 523.8 627.0 515.1 624.4Z"/><path fill="#00c0ff" stroke="#00c0ff" stroke-width="0.4" d="M532.0 603.3 540.0 605.6 538.8 609.6 530.6 607.2ZM596.0 621.8 600.0 623.0 599.7 627.3 595.6 626.2ZM530.6 607.2 538.8 609.6 537.5 613.6 529.3 611.2ZM595.6 626.2 599.7 627.3 599.3 631.7 595.2 630.5ZM529.3 611.2 537.5 613.6 536.3 617.6 527.9 615.1ZM595.2 630.5 599.3 631.7 599.0 636.0 594.8 634.8ZM527.9 615.1 536.3 617.6 535.0 621.6 526.5 619.1ZM594.8 634.8 599.0 636.0 598.7 640.3 594.4 639.1ZM526.5 619.1 535.0 621.6 533.8 625.6 525.2 623.0ZM594.4 639.1 598.7 640.3 598.3 644.7 594.0 643.4ZM525.2 623.0 533.8 625.6 532.5 629.6 523.8 627.0ZM594.0 643.4 598.3 644.7 598.0 649.0 593.6 647.7Z"/><path fill="#0070ff" stroke="#0070ff" stroke-width="0.4" d="M540.0 605.6 548.0 607.9 546.9 612.0 538.8 609.6ZM588.0 619.5 596.0 621.8 595.6 626.2 587.5 623.8ZM538.8 609.6 546.9 612.0 545.8 616.0 537.5 613.6ZM587.5 623.8 595.6 626.2 595.2 630.5 587.0 628.1ZM537.5 613.6 545.8 616.0 544.6 620.0 536.3 617.6ZM587.0 628.1 595.2 630.5 594.8 634.8 586.5 632.3ZM536.3 617.6 544.6 620.0 543.5 624.1 535.0 621.6ZM586.5 632.3 594.8 634.8 594.4 639.1 585.9 636.6ZM535.0 621.6 543.5 624.1 542.4 628.1 533.8 625.6ZM585.9 636.6 594.4 639.1 594.0 643.4 585.4 640.8ZM533.8 625.6 542.4 628.1 541.3 632.2 532.5 629.6ZM585.4 640.8 594.0 643.4 593.6 647.7 584.9 645.1Z"/><path fill="#0000ff" stroke="#0000ff" stroke-width="0.4" d="M548.0 607.9 588.0 619.5 587.5 623.8 546.9 612.0ZM546.9 612.0 587.5 623.8 587.0 628.1 545.8 616.0ZM545.8 616.0 587.0 628.1 586.5 632.3 544.6 620.0ZM544.6 620.0 586.5 632.3 585.9 636.6 543.5 624.1ZM543.5 624.1 585.9 636.6 585.4 640.8 542.4 628.1ZM542.4 628.1 585.4 640.8 584.9 645.1 541.3 632.2Z"/><path fill="none" stroke="#111" stroke-width="0.9" d="M512.0 597.5L502.0 620.5M520.0 599.8L510.7 623.1M528.0 602.1L519.5 625.7M536.0 604.5L528.2 628.3M544.0 606.8L536.9 630.9M552.0 609.1L545.6 633.5M560.0 611.4L554.4 636.0M568.0 613.7L563.1 638.6M576.0 616.0L571.8 641.2M584.0 618.4L580.5 643.8M592.0 620.7L589.3 646.4M600.0 623.0L598.0 649.0M512.0 597.5L600.0 623.0M508.7 605.2L599.3 631.7M505.3 612.8L598.7 640.3M502.0 620.5L598.0 649.0"/><path fill="#00e8e0" stroke="#00e8e0" stroke-width="0.4" d="M600.0 623.0 604.2 625.1 604.0 629.2 599.7 627.3ZM599.7 627.3 604.0 629.2 603.7 633.3 599.3 631.7ZM599.3 631.7 603.7 633.3 603.4 637.4 599.0 636.0ZM599.0 636.0 603.4 637.4 603.1 641.5 598.7 640.3ZM598.7 640.3 603.1 641.5 602.8 645.6 598.3 644.7ZM598.3 644.7 602.8 645.6 602.5 649.8 598.0 649.0Z"/><path fill="#00b890" stroke="#00b890" stroke-width="0.4" d="M604.2 625.1 608.5 627.1 608.3 631.0 604.0 629.2ZM604.0 629.2 608.3 631.0 608.0 634.9 603.7 633.3ZM603.7 633.3 608.0 634.9 607.8 638.8 603.4 637.4ZM603.4 637.4 607.8 638.8 607.5 642.7 603.1 641.5ZM603.1 641.5 607.5 642.7 607.2 646.6 602.8 645.6ZM602.8 645.6 607.2 646.6 607.0 650.5 602.5 649.8Z"/><path fill="#207000" stroke="#207000" stroke-width="0.4" d="M608.5 627.1 612.8 629.2 612.5 632.9 608.3 631.0ZM608.3 631.0 612.5 632.9 612.3 636.5 608.0 634.9ZM608.0 634.9 612.3 636.5 612.1 640.2 607.8 638.8ZM607.8 638.8 612.1 640.2 611.9 643.9 607.5 642.7ZM607.5 642.7 611.9 643.9 611.7 647.6 607.2 646.6ZM607.2 646.6 611.7 647.6 611.5 651.2 607.0 650.5Z"/><path fill="#80a800" stroke="#80a800" stroke-width="0.4" d="M612.8 629.2 617.0 631.2 616.8 634.7 612.5 632.9ZM612.5 632.9 616.8 634.7 616.7 638.2 612.3 636.5ZM612.3 636.5 616.7 638.2 616.5 641.6 612.1 640.2ZM612.1 640.2 616.5 641.6 616.3 645.1 611.9 643.9ZM611.9 643.9 616.3 645.1 616.2 648.5 611.7 647.6ZM611.7 647.6 616.2 648.5 616.0 652.0 611.5 651.2Z"/><path fill="#f8e800" stroke="#f8e800" stroke-width="0.4" d="M617.0 631.2 621.2 633.3 621.1 636.6 616.8 634.7ZM659.5 651.9 668.0 656.0 668.3 656.8 659.8 653.1ZM616.8 634.7 621.1 636.6 621.0 639.8 616.7 638.2ZM659.8 653.1 668.3 656.8 668.7 657.7 660.0 654.4ZM616.7 638.2 621.0 639.8 620.9 643.0 616.5 641.6ZM655.7 652.8 668.7 657.7 669.0 658.5 655.9 654.3ZM616.5 641.6 620.9 643.0 620.8 646.3 616.3 645.1ZM655.9 654.3 669.0 658.5 669.3 659.3 656.1 655.8ZM616.3 645.1 620.8 646.3 620.6 649.5 616.2 648.5ZM656.1 655.8 669.3 659.3 669.7 660.2 656.3 657.3ZM616.2 648.5 620.6 649.5 620.5 652.8 616.0 652.0ZM656.3 657.3 669.7 660.2 670.0 661.0 656.5 658.8Z"/><path fill="#ff4000" stroke="#ff4000" stroke-width="0.4" d="M621.2 633.3 625.5 635.4 625.4 638.4 621.1 636.6ZM651.0 647.8 655.2 649.8 655.5 651.3 651.2 649.5ZM621.1 636.6 625.4 638.4 625.3 641.4 621.0 639.8ZM651.2 649.5 655.5 651.3 655.7 652.8 651.3 651.2ZM629.7 643.0 638.3 646.3 638.4 648.7 629.6 645.8ZM642.7 647.9 647.0 649.5 647.1 651.5 642.8 650.1ZM629.6 645.8 638.4 648.7 638.4 651.0 629.6 648.6ZM642.8 650.1 647.1 651.5 647.3 653.4 642.8 652.2ZM629.6 648.6 638.4 651.0 638.5 653.4 629.5 651.4ZM642.8 652.2 647.3 653.4 647.4 655.3 642.9 654.4ZM629.5 651.4 638.5 653.4 638.5 655.8 629.5 654.2ZM642.9 654.4 647.4 655.3 647.5 657.2 643.0 656.5Z"/><path fill="#ff0000" stroke="#ff0000" stroke-width="0.4" d="M625.5 635.4 629.8 637.4 629.7 640.2 625.4 638.4ZM646.8 645.7 651.0 647.8 651.2 649.5 646.9 647.6ZM625.4 638.4 629.7 640.2 629.7 643.0 625.3 641.4ZM646.9 647.6 651.2 649.5 651.3 651.2 647.0 649.5ZM638.3 646.3 642.7 647.9 642.8 650.1 638.4 648.7ZM638.4 648.7 642.8 650.1 642.8 652.2 638.4 651.0ZM638.4 651.0 642.8 652.2 642.9 654.4 638.5 653.4ZM638.5 653.4 642.9 654.4 643.0 656.5 638.5 655.8Z"/><path fill="#d80000" stroke="#d80000" stroke-width="0.4" d="M629.8 637.4 638.2 641.6 638.3 643.9 629.7 640.2ZM642.5 643.6 646.8 645.7 646.9 647.6 642.6 645.8ZM629.7 640.2 638.3 643.9 638.3 646.3 629.7 643.0ZM642.6 645.8 646.9 647.6 647.0 649.5 642.7 647.9Z"/><path fill="#c00000" stroke="#c00000" stroke-width="0.4" d="M638.2 641.6 642.5 643.6 642.6 645.8 638.3 643.9ZM638.3 643.9 642.6 645.8 642.7 647.9 638.3 646.3Z"/><path fill="#ffa000" stroke="#ffa000" stroke-width="0.4" d="M655.2 649.8 659.5 651.9 659.8 653.1 655.5 651.3ZM655.5 651.3 659.8 653.1 660.0 654.4 655.7 652.8ZM621.0 639.8 625.3 641.4 625.2 644.4 620.9 643.0ZM651.3 651.2 655.7 652.8 655.9 654.3 651.5 652.9ZM620.9 643.0 625.2 644.4 625.2 647.5 620.8 646.3ZM651.5 652.9 655.9 654.3 656.1 655.8 651.7 654.6ZM620.8 646.3 625.2 647.5 625.1 650.5 620.6 649.5ZM651.7 654.6 656.1 655.8 656.3 657.3 651.8 656.3ZM620.6 649.5 625.1 650.5 625.0 653.5 620.5 652.8ZM651.8 656.3 656.3 657.3 656.5 658.8 652.0 658.0Z"/><path fill="#ff7000" stroke="#ff7000" stroke-width="0.4" d="M625.3 641.4 629.7 643.0 629.6 645.8 625.2 644.4ZM647.0 649.5 651.3 651.2 651.5 652.9 647.1 651.5ZM625.2 644.4 629.6 645.8 629.6 648.6 625.2 647.5ZM647.1 651.5 651.5 652.9 651.7 654.6 647.3 653.4ZM625.2 647.5 629.6 648.6 629.5 651.4 625.1 650.5ZM647.3 653.4 651.7 654.6 651.8 656.3 647.4 655.3ZM625.1 650.5 629.5 651.4 629.5 654.2 625.0 653.5ZM647.4 655.3 651.8 656.3 652.0 658.0 647.5 657.2Z"/><path fill="none" stroke="#111" stroke-width="0.9" d="M600.0 623.0L598.0 649.0M608.5 627.1L607.0 650.5M617.0 631.2L616.0 652.0M625.5 635.4L625.0 653.5M634.0 639.5L634.0 655.0M642.5 643.6L643.0 656.5M651.0 647.8L652.0 658.0M659.5 651.9L661.0 659.5M668.0 656.0L670.0 661.0M600.0 623.0L668.0 656.0M599.3 631.7L668.7 657.7M598.7 640.3L669.3 659.3M598.0 649.0L670.0 661.0"/><path fill="#80a800" stroke="#80a800" stroke-width="0.4" d="M488.3 616.2 523.5 627.0 523.5 632.5 488.2 623.6Z"/><path fill="#008040" stroke="#008040" stroke-width="0.4" d="M488.2 623.6 523.5 632.5 523.5 638.0 488.2 631.1ZM488.2 631.1 523.5 638.0 523.5 643.5 488.1 638.5Z"/><path fill="#00e8e0" stroke="#00e8e0" stroke-width="0.4" d="M488.1 638.5 523.5 643.5 523.5 649.0 488.1 646.0ZM499.9 647.0 523.5 649.0 523.5 654.5 499.9 653.8ZM499.9 653.8 523.5 654.5 523.5 660.0 499.8 660.5ZM499.8 660.5 523.5 660.0 523.5 665.5 499.8 667.3Z"/><path fill="#00c0ff" stroke="#00c0ff" stroke-width="0.4" d="M488.1 646.0 499.9 647.0 499.9 653.8 488.0 653.4ZM488.0 653.4 499.9 653.8 499.8 660.5 488.0 660.8ZM488.0 660.8 499.8 660.5 499.8 667.3 487.9 668.3ZM487.7 698.0 499.6 694.5 499.6 701.3 487.7 705.5ZM487.7 705.5 499.6 701.3 499.6 708.1 487.6 712.9ZM487.6 712.9 499.6 708.1 499.5 714.9 487.6 720.3ZM487.6 720.3 499.5 714.9 499.5 721.7 487.5 727.8Z"/><path fill="#0070ff" stroke="#0070ff" stroke-width="0.4" d="M487.9 668.3 523.5 665.5 523.5 671.0 487.9 675.7ZM487.9 675.7 523.5 671.0 523.5 676.5 487.8 683.1ZM487.8 683.1 523.5 676.5 523.5 682.0 487.8 690.6ZM487.8 690.6 523.5 682.0 523.5 687.4 487.7 698.0ZM499.6 694.5 523.5 687.4 523.5 692.9 499.6 701.3ZM499.6 701.3 523.5 692.9 523.5 698.4 499.6 708.1ZM499.6 708.1 523.5 698.4 523.5 703.9 499.5 714.9ZM499.5 714.9 523.5 703.9 523.5 709.4 499.5 721.7ZM487.5 727.8 523.5 709.4 523.5 714.9 487.5 735.2ZM487.5 735.2 523.5 714.9 523.5 720.4 487.4 742.6ZM487.4 742.6 523.5 720.4 523.5 725.9 487.4 750.1ZM487.4 750.1 523.5 725.9 523.5 731.4 487.3 757.5ZM487.3 757.5 523.5 731.4 523.5 736.9 487.3 765.0ZM487.3 765.0 523.5 736.9 523.5 742.4 487.2 772.4Z"/><path fill="none" stroke="#111" stroke-width="0.9" d="M488.3 616.2L487.2 772.4M494.2 618.0L493.2 767.4M500.0 619.8L499.3 762.4M505.9 621.6L505.4 757.4M511.8 623.4L511.4 752.4M517.6 625.2L517.4 747.4M523.5 627.0L523.5 742.4M488.3 616.2L523.5 627.0M488.2 623.6L523.5 632.5M488.2 631.1L523.5 638.0M488.1 638.5L523.5 643.5M488.1 646.0L523.5 649.0M488.0 653.4L523.5 654.5M488.0 660.8L523.5 660.0M487.9 668.3L523.5 665.5M487.9 675.7L523.5 671.0M487.8 683.1L523.5 676.5M487.8 690.6L523.5 682.0M487.7 698.0L523.5 687.4M487.7 705.5L523.5 692.9M487.6 712.9L523.5 698.4M487.6 720.3L523.5 703.9M487.5 727.8L523.5 709.4M487.5 735.2L523.5 714.9M487.4 742.6L523.5 720.4M487.4 750.1L523.5 725.9M487.3 757.5L523.5 731.4M487.3 765.0L523.5 736.9M487.2 772.4L523.5 742.4"/><path fill="#00b890" stroke="#00b890" stroke-width="0.4" d="M523.5 627.0 598.0 649.0 598.0 656.1 523.5 634.2Z"/><path fill="#00c0ff" stroke="#00c0ff" stroke-width="0.4" d="M523.5 634.2 598.0 656.1 598.0 663.3 523.5 641.4ZM523.5 641.4 560.8 652.3 560.8 659.5 523.5 648.6ZM579.4 657.8 598.0 663.3 598.0 670.4 579.4 665.0ZM523.5 648.6 554.5 657.7 554.5 664.9 523.5 655.9ZM585.6 666.8 598.0 670.4 598.0 677.5 585.6 673.9Z"/><path fill="#0000ff" stroke="#0000ff" stroke-width="0.4" d="M560.8 652.3 579.4 657.8 579.4 665.0 560.8 659.5ZM554.5 657.7 585.6 666.8 585.6 673.9 554.5 664.9ZM548.3 663.1 591.8 675.7 591.8 682.9 548.3 670.3ZM548.3 670.3 591.8 682.9 591.8 690.0 548.3 677.4ZM542.1 675.7 598.0 691.8 598.0 698.9 542.1 682.8ZM542.1 682.8 598.0 698.9 598.0 706.0 542.1 690.0ZM542.1 690.0 598.0 706.0 598.0 713.2 542.1 697.2ZM542.1 697.2 598.0 713.2 598.0 720.3 542.1 704.4ZM548.3 706.2 591.8 718.5 591.8 725.7 548.3 713.4ZM548.3 713.4 591.8 725.7 591.8 732.8 548.3 720.6ZM554.5 722.3 585.6 731.1 585.6 738.2 554.5 729.5ZM560.8 731.2 579.4 736.5 579.4 743.6 560.8 738.4Z"/><path fill="#0070ff" stroke="#0070ff" stroke-width="0.4" d="M523.5 655.9 548.3 663.1 548.3 670.3 523.5 663.1ZM591.8 675.7 598.0 677.5 598.0 684.7 591.8 682.9ZM523.5 663.1 548.3 670.3 548.3 677.4 523.5 670.3ZM591.8 682.9 598.0 684.7 598.0 691.8 591.8 690.0ZM523.5 670.3 542.1 675.7 542.1 682.8 523.5 677.5ZM523.5 677.5 542.1 682.8 542.1 690.0 523.5 684.7ZM523.5 684.7 542.1 690.0 542.1 697.2 523.5 691.9ZM523.5 691.9 542.1 697.2 542.1 704.4 523.5 699.1ZM523.5 699.1 548.3 706.2 548.3 713.4 523.5 706.3ZM591.8 718.5 598.0 720.3 598.0 727.4 591.8 725.7ZM523.5 706.3 548.3 713.4 548.3 720.6 523.5 713.5ZM591.8 725.7 598.0 727.4 598.0 734.6 591.8 732.8ZM523.5 713.5 554.5 722.3 554.5 729.5 523.5 720.8ZM585.6 731.1 598.0 734.6 598.0 741.7 585.6 738.2ZM523.5 720.8 560.8 731.2 560.8 738.4 523.5 728.0ZM579.4 736.5 598.0 741.7 598.0 748.8 579.4 743.6ZM523.5 728.0 598.0 748.8 598.0 756.0 523.5 735.2ZM523.5 735.2 598.0 756.0 598.0 763.1 523.5 742.4Z"/><path fill="none" stroke="#111" stroke-width="0.9" d="M523.5 627.0L523.5 742.4M529.7 628.8L529.7 744.1M535.9 630.7L535.9 745.8M542.1 632.5L542.1 747.6M548.3 634.3L548.3 749.3M554.5 636.2L554.5 751.0M560.8 638.0L560.8 752.8M567.0 639.8L567.0 754.5M573.2 641.7L573.2 756.2M579.4 643.5L579.4 757.9M585.6 645.3L585.6 759.7M591.8 647.2L591.8 761.4M598.0 649.0L598.0 763.1M523.5 627.0L598.0 649.0M523.5 634.2L598.0 656.1M523.5 641.4L598.0 663.3M523.5 648.6L598.0 670.4M523.5 655.9L598.0 677.5M523.5 663.1L598.0 684.7M523.5 670.3L598.0 691.8M523.5 677.5L598.0 698.9M523.5 684.7L598.0 706.0M523.5 691.9L598.0 713.2M523.5 699.1L598.0 720.3M523.5 706.3L598.0 727.4M523.5 713.5L598.0 734.6M523.5 720.8L598.0 741.7M523.5 728.0L598.0 748.8M523.5 735.2L598.0 756.0M523.5 742.4L598.0 763.1"/><path fill="#80a800" stroke="#80a800" stroke-width="0.4" d="M598.0 649.0 630.2 654.3 630.2 659.9 598.0 656.1ZM598.0 656.1 630.2 659.9 630.3 665.5 598.1 663.1Z"/><path fill="#00b890" stroke="#00b890" stroke-width="0.4" d="M630.2 654.3 670.4 661.0 670.4 664.7 630.2 659.9ZM630.2 659.9 670.4 664.7 670.5 668.4 630.3 665.5Z"/><path fill="#00c0ff" stroke="#00c0ff" stroke-width="0.4" d="M598.1 663.1 606.1 663.7 606.2 670.4 598.1 670.2ZM654.4 667.2 670.5 668.4 670.5 672.1 654.4 671.7ZM598.1 670.2 606.2 670.4 606.2 677.1 598.2 677.3ZM654.4 671.7 670.5 672.1 670.6 675.8 654.5 676.1ZM598.2 677.3 606.2 677.1 606.3 683.8 598.2 684.3ZM654.5 676.1 670.6 675.8 670.6 679.5 654.5 680.6ZM598.2 684.3 606.3 683.8 606.3 690.5 598.3 691.4ZM654.5 680.6 670.6 679.5 670.7 683.2 654.6 685.0ZM598.3 691.4 606.3 690.5 606.4 697.2 598.3 698.5ZM654.6 685.0 670.7 683.2 670.7 686.9 654.6 689.5ZM598.3 698.5 606.4 697.2 606.4 703.9 598.4 705.5ZM654.6 689.5 670.7 686.9 670.8 690.6 654.7 693.9ZM654.7 698.4 670.8 694.3 670.9 698.0 654.8 702.8ZM654.8 702.8 670.9 698.0 670.9 701.7 654.8 707.3ZM654.8 707.3 670.9 701.7 670.9 705.4 654.9 711.7ZM598.5 733.8 606.6 730.7 606.6 737.4 598.6 740.9ZM654.9 711.7 670.9 705.4 671.0 709.1 654.9 716.2ZM598.6 740.9 606.6 737.4 606.7 744.0 598.6 748.0ZM654.9 716.2 671.0 709.1 671.0 712.8 654.9 720.6ZM598.6 748.0 606.7 744.0 606.7 750.7 598.7 755.0ZM654.9 720.6 671.0 712.8 671.1 716.5 655.0 725.1ZM598.7 755.0 606.7 750.7 606.8 757.4 598.7 762.1ZM598.7 762.1 606.8 757.4 606.8 764.1 598.8 769.2ZM598.8 769.2 606.8 764.1 606.9 770.8 598.8 776.2Z"/><path fill="#00e8e0" stroke="#00e8e0" stroke-width="0.4" d="M606.1 663.7 654.4 667.2 654.4 671.7 606.2 670.4ZM606.2 670.4 654.4 671.7 654.5 676.1 606.2 677.1ZM606.2 677.1 654.5 676.1 654.5 680.6 606.3 683.8ZM606.3 683.8 654.5 680.6 654.6 685.0 606.3 690.5ZM606.3 690.5 654.6 685.0 654.6 689.5 606.4 697.2ZM606.4 697.2 654.6 689.5 654.7 693.9 606.4 703.9Z"/><path fill="#0070ff" stroke="#0070ff" stroke-width="0.4" d="M598.4 705.5 670.8 690.6 670.8 694.3 598.4 712.6ZM598.4 712.6 654.7 698.4 654.8 702.8 598.5 719.7ZM598.5 719.7 654.8 702.8 654.8 707.3 598.5 726.8ZM598.5 726.8 654.8 707.3 654.9 711.7 598.5 733.8ZM606.6 730.7 654.9 711.7 654.9 716.2 606.6 737.4ZM606.6 737.4 654.9 716.2 654.9 720.6 606.7 744.0ZM606.7 744.0 654.9 720.6 655.0 725.1 606.7 750.7ZM606.7 750.7 671.1 716.5 671.1 720.2 606.8 757.4ZM606.8 757.4 671.1 720.2 671.2 723.9 606.8 764.1ZM606.8 764.1 671.2 723.9 671.2 727.6 606.9 770.8ZM598.8 776.2 671.2 727.6 671.3 731.3 598.9 783.3ZM598.9 783.3 671.3 731.3 671.3 735.0 598.9 790.4ZM598.9 790.4 671.3 735.0 671.4 738.7 599.0 797.4ZM599.0 797.4 671.4 738.7 671.4 742.4 599.0 804.5Z"/><path fill="none" stroke="#111" stroke-width="0.9" d="M598.0 649.0L599.0 804.5M606.0 650.3L607.0 797.6M614.1 651.7L615.1 790.7M622.1 653.0L623.1 783.8M630.2 654.3L631.2 776.9M638.2 655.7L639.2 770.0M646.3 657.0L647.3 763.1M654.3 658.3L655.3 756.2M662.4 659.7L663.4 749.3M670.4 661.0L671.4 742.4M598.0 649.0L670.4 661.0M598.0 656.1L670.4 664.7M598.1 663.1L670.5 668.4M598.1 670.2L670.5 672.1M598.2 677.3L670.6 675.8M598.2 684.3L670.6 679.5M598.3 691.4L670.7 683.2M598.3 698.5L670.7 686.9M598.4 705.5L670.8 690.6M598.4 712.6L670.8 694.3M598.5 719.7L670.9 698.0M598.5 726.8L670.9 701.7M598.5 733.8L670.9 705.4M598.6 740.9L671.0 709.1M598.6 748.0L671.0 712.8M598.7 755.0L671.1 716.5M598.7 762.1L671.1 720.2M598.8 769.2L671.2 723.9M598.8 776.2L671.2 727.6M598.9 783.3L671.3 731.3M598.9 790.4L671.3 735.0M599.0 797.4L671.4 738.7M599.0 804.5L671.4 742.4"/><g stroke="#111" stroke-width="0.9" stroke-linejoin="round">
<path fill="#7cfc00" d="M285 404 L277.5 412 L277.5 445 L285.5 445 Z"/>
<path fill="#7cfc00" d="M277.5 413 Q262 414 256 424 Q249 437 258 452 L263 459 L269 456 Q259 440 263 428 Q267 419 277.5 419 Z"/>
<path fill="#7cfc00" d="M258 462 L289 452 L281 474 L274 462 Z"/>
<path fill="#7cfc00" d="M874.5 581.2 L881.7 576.7 L881.5 630 L874 632 Z"/>
<path fill="#7cfc00" d="M876.3 592.1 Q886 585 896 595 Q906 606 906 618 Q905 630 896 636 L890 634 Q898 626 898 618 Q897 605 889 598 Q882 594 876.3 597 Z"/>
<path fill="#7cfc00" d="M870 635.6 L877.7 644.6 L885.8 622 L881 628 Z"/>
<path fill="#7cfc00" d="M880 637 L898 631 L888 642 Z"/>
<path fill="#ff0000" stroke="none" d="M579.4 812.7 L586.5 831.1 Q586.5 833.6 582 833.6 L581.9 874.5 L577 874.5 L577 833.6 Q572.2 833.6 572.2 831.1 Z"/>
</g>
<rect x="281.2" y="381" width="35.8" height="14.7" fill="#c8c8c8"/><text x="283" y="392" font-size="11" fill="#333" font-family="Liberation Sans">-150.0</text>
<rect x="265.3" y="440" width="35.7" height="13" fill="#bbb" fill-opacity="0.6"/><text x="267" y="451" font-size="11" fill="#333" font-family="Liberation Sans">-100.0</text>
<rect x="877.7" y="553.2" width="35.7" height="14.4" fill="#c8c8c8"/><text x="879" y="564.5" font-size="11" fill="#333" font-family="Liberation Sans">-150.0</text>
<rect x="893" y="621" width="31.8" height="14.6" fill="#c8c8c8" fill-opacity="0.9"/><text x="895" y="632.5" font-size="11" fill="#333" font-family="Liberation Sans">100.0</text>
<rect x="579.2" y="872" width="36" height="14.4" fill="#c8c8c8"/><text x="581" y="883.5" font-size="11" fill="#333" font-family="Liberation Sans">-300.0</text>
</svg><!--/MODEL-->
<!-- legend -->
<svg class="a" style="left:1065px;top:349.6px" width="27" height="304"><rect x="0" y="0.00" width="27" height="15.50" fill="#b00000"/><rect x="0" y="15.20" width="27" height="15.50" fill="#d80000"/><rect x="0" y="30.40" width="27" height="15.50" fill="#ff0000"/><rect x="0" y="45.60" width="27" height="15.50" fill="#ff4000"/><rect x="0" y="60.80" width="27" height="15.50" fill="#ff7000"/><rect x="0" y="76.00" width="27" height="15.50" fill="#ffa000"/><rect x="0" y="91.20" width="27" height="15.50" fill="#ffc800"/><rect x="0" y="106.40" width="27" height="15.50" fill="#f8e800"/><rect x="0" y="121.60" width="27" height="15.50" fill="#d8e000"/><rect x="0" y="136.80" width="27" height="15.50" fill="#80a800"/><rect x="0" y="152.00" width="27" height="15.50" fill="#207000"/><rect x="0" y="167.20" width="27" height="15.50" fill="#008040"/><rect x="0" y="182.40" width="27" height="15.50" fill="#00b890"/><rect x="0" y="197.60" width="27" height="15.50" fill="#00e8e0"/><rect x="0" y="212.80" width="27" height="15.50" fill="#00c0ff"/><rect x="0" y="228.00" width="27" height="15.50" fill="#0070ff"/><rect x="0" y="243.20" width="27" height="15.50" fill="#0000ff"/><rect x="0" y="258.40" width="27" height="15.50" fill="#1a0ad8"/><rect x="0" y="273.60" width="27" height="15.50" fill="#2c10a8"/><rect x="0" y="288.80" width="27" height="15.50" fill="#400878"/><rect x="0.5" y="0.5" width="26" height="303" fill="none" stroke="#222" stroke-width="1"/></svg>
<div class="a" style="left:1058px;top:349.6px;width:8px;height:1px;background:#333"></div><div class="a" style="left:990px;width:60px;text-align:right;top:336.1px;font-size:12px;color:#333">275.0</div><div class="a" style="left:1058px;top:377.2px;width:8px;height:1px;background:#333"></div><div class="a" style="left:990px;width:60px;text-align:right;top:363.7px;font-size:12px;color:#333">250</div><div class="a" style="left:1058px;top:404.9px;width:8px;height:1px;background:#333"></div><div class="a" style="left:990px;width:60px;text-align:right;top:391.4px;font-size:12px;color:#333">225</div><div class="a" style="left:1058px;top:432.5px;width:8px;height:1px;background:#333"></div><div class="a" style="left:990px;width:60px;text-align:right;top:419.0px;font-size:12px;color:#333">200</div><div class="a" style="left:1058px;top:460.1px;width:8px;height:1px;background:#333"></div><div class="a" style="left:990px;width:60px;text-align:right;top:446.6px;font-size:12px;color:#333">175</div><div class="a" style="left:1058px;top:487.8px;width:8px;height:1px;background:#333"></div><div class="a" style="left:990px;width:60px;text-align:right;top:474.3px;font-size:12px;color:#333">150</div><div class="a" style="left:1058px;top:515.4px;width:8px;height:1px;background:#333"></div><div class="a" style="left:990px;width:60px;text-align:right;top:501.9px;font-size:12px;color:#333">125</div><div class="a" style="left:1058px;top:543.1px;width:8px;height:1px;background:#333"></div><div class="a" style="left:990px;width:60px;text-align:right;top:529.6px;font-size:12px;color:#333">100</div><div class="a" style="left:1058px;top:570.7px;width:8px;height:1px;background:#333"></div><div class="a" style="left:990px;width:60px;text-align:right;top:557.2px;font-size:12px;color:#333">75</div><div class="a" style="left:1058px;top:598.3px;width:8px;height:1px;background:#333"></div><div class="a" style="left:990px;width:60px;text-align:right;top:584.8px;font-size:12px;color:#333">50</div><div class="a" style="left:1058px;top:626.0px;width:8px;height:1px;background:#333"></div><div class="a" style="left:990px;width:60px;text-align:right;top:612.5px;font-size:12px;color:#333">25</div><div class="a" style="left:1058px;top:653px;width:8px;height:1px;background:#333"></div><div class="a" style="left:990px;width:60px;text-align:right;top:654.5px;font-size:12px;color:#333">0.0</div>
<div class="a" style="left:1052px;top:302px;font-size:15.5px;color:#333">[MPa]</div>
<svg class="a" style="left:1015px;top:210px" width="95" height="85">
<ellipse cx="46" cy="56" rx="41" ry="17" fill="none" stroke="#dcdcdc" stroke-width="9"/>
<path d="M16.9 20.3 L39.3 7.9 L72.4 14.7 L67.9 47 L53.3 66.8 L20.2 54.5 Z" fill="#aaa" stroke="#777" stroke-width="0.8"/>
<path d="M16.9 20.3 L54.4 29.8 L72.4 14.7 M54.4 29.8 L53.3 66.8" stroke="#777" stroke-width="0.8" fill="none"/>
<path d="M20.2 54.5 L39.3 38 L67.9 47 M39.3 7.9 L39.3 38" stroke="#888" stroke-width="0.6" fill="none"/>
<path d="M5 40 l10 -2 M11 37 l2 6" stroke="#666" stroke-width="1.2"/>
<path d="M82 60 l11 5" stroke="#666" stroke-width="1"/>
<path d="M21 80 l10 -8 M27 76 l7 -3 M28 73 l-3 -5" stroke="#666" stroke-width="2.5" transform="translate(-1,-9)"/>
</svg>
<!-- right panel -->
<div class="a" style="left:1145px;top:168px;font-size:12.5px;color:#fff">Analysis</div>
<div class="a" style="left:1200px;top:164px;width:58px;height:22px;background:#f0f0f0"></div>
<div class="a" style="left:1212px;top:168px;font-size:12.5px;color:#f28a4a">Plates</div>
<div class="a" style="left:1270px;top:168px;font-size:12.5px;color:#fff">Bolts</div>
<div class="a" style="left:1322px;top:168px;font-size:12.5px;color:#fff">Welds</div>
<div class="a" style="left:1194px;top:151px;width:68px;height:47px;border:3px solid #ff0000;border-radius:7px"></div>
<div class="a" style="left:1143px;top:202px;font-size:12.5px;font-weight:bold;color:#f26f21">Check of members and steel plates for extreme load effect</div>
<div class="a" style="left:1128px;top:186px;width:792px;height:392px;overflow:hidden">
<div class="a" style="left:-1128px;top:-186px;width:1920px;height:1160px">
<div class="a" style="left:1139px;top:222px;width:370px;height:49px;background:#f0f0f0"></div><div class="a" style="left:1139px;top:444.1px;width:370px;height:28.9px;background:#ebebeb"></div><div class="a" style="left:1138.0px;top:221px;width:1px;height:357px;background:#c4c4c4"></div><div class="a" style="left:1167.0px;top:221px;width:1px;height:357px;background:#c4c4c4"></div><div class="a" style="left:1214.0px;top:221px;width:1px;height:357px;background:#c4c4c4"></div><div class="a" style="left:1263.0px;top:221px;width:1px;height:357px;background:#c4c4c4"></div><div class="a" style="left:1313.0px;top:221px;width:1px;height:357px;background:#c4c4c4"></div><div class="a" style="left:1357.0px;top:221px;width:1px;height:357px;background:#c4c4c4"></div><div class="a" style="left:1407.0px;top:221px;width:1px;height:357px;background:#c4c4c4"></div><div class="a" style="left:1457.0px;top:221px;width:1px;height:357px;background:#c4c4c4"></div><div class="a" style="left:1508.0px;top:221px;width:1px;height:357px;background:#c4c4c4"></div><div class="a" style="left:1138px;top:221px;width:371px;height:1px;background:#c4c4c4"></div><div class="a" style="left:1138px;top:270.2px;width:371px;height:1px;background:#c4c4c4"></div><div class="a" style="left:1138px;top:299.1px;width:371px;height:1px;background:#c4c4c4"></div><div class="a" style="left:1138px;top:328.0px;width:371px;height:1px;background:#c4c4c4"></div><div class="a" style="left:1138px;top:356.9px;width:371px;height:1px;background:#c4c4c4"></div><div class="a" style="left:1138px;top:385.8px;width:371px;height:1px;background:#c4c4c4"></div><div class="a" style="left:1138px;top:414.7px;width:371px;height:1px;background:#c4c4c4"></div><div class="a" style="left:1138px;top:443.6px;width:371px;height:1px;background:#c4c4c4"></div><div class="a" style="left:1138px;top:472.5px;width:371px;height:1px;background:#c4c4c4"></div><div class="a" style="left:1138px;top:501.4px;width:371px;height:1px;background:#c4c4c4"></div><div class="a" style="left:1138px;top:530.3px;width:371px;height:1px;background:#c4c4c4"></div><div class="a" style="left:1138px;top:559.2px;width:371px;height:1px;background:#c4c4c4"></div><div class="a" style="left:1138px;top:588.1px;width:371px;height:1px;background:#c4c4c4"></div><div class="a" style="left:1172px;top:240px;font-size:12px;font-weight:bold;color:#333">Status</div><div class="a" style="left:1219px;top:240px;font-size:12px;font-weight:bold;color:#333">Item</div><div class="a" style="left:1317px;top:240px;font-size:12px;font-weight:bold;color:#333">Loads</div><div class="a" style="left:1268px;top:232px;font-size:12px;font-weight:bold;color:#333">t<sub style="font-size:10px;vertical-align:-3px">p</sub></div><div class="a" style="left:1268px;top:252px;font-size:10px;color:#555">[mm]</div><div class="a" style="left:1362px;top:232px;font-size:12px;font-weight:bold;color:#333">&#963;<sub style="font-size:10px;vertical-align:-3px">Ed</sub></div><div class="a" style="left:1362px;top:252px;font-size:10px;color:#555">[MPa]</div><div class="a" style="left:1412px;top:232px;font-size:12px;font-weight:bold;color:#333">&#949;<sub style="font-size:10px;vertical-align:-3px">Pl</sub></div><div class="a" style="left:1412px;top:252px;font-size:10px;color:#555">[%]</div><div class="a" style="left:1462px;top:232px;font-size:12px;font-weight:bold;color:#333">&#963;<sub style="font-size:10px;vertical-align:-3px">c,Ed</sub></div><div class="a" style="left:1462px;top:252px;font-size:10px;color:#555">[MPa]</div><svg class="a" style="left:1183px;top:276.6px" width="17" height="17"><circle cx="8.5" cy="8.5" r="8" fill="#4cc24c"/><path d="M4.5 8.5 l3 3 l5 -5.5" stroke="#fff" stroke-width="2.2" fill="none"/></svg><div class="a" style="left:1219px;top:279.9px;font-size:11.5px;color:#555;letter-spacing:-0.25px">C-bfl 1</div><div class="a" style="left:1268px;top:279.9px;font-size:11.5px;color:#555">9.2</div><div class="a" style="left:1318px;top:279.9px;font-size:11.5px;color:#555">LE1</div><div class="a" style="left:1362px;top:279.9px;font-size:11.5px;color:#555">283.4</div><div class="a" style="left:1412px;top:279.9px;font-size:11.5px;color:#555">4.0</div><div class="a" style="left:1462px;top:279.9px;font-size:11.5px;color:#555">47.3</div><svg class="a" style="left:1183px;top:305.5px" width="17" height="17"><circle cx="8.5" cy="8.5" r="8" fill="#4cc24c"/><path d="M4.5 8.5 l3 3 l5 -5.5" stroke="#fff" stroke-width="2.2" fill="none"/></svg><div class="a" style="left:1219px;top:308.8px;font-size:11.5px;color:#555;letter-spacing:-0.25px">C-tfl 1</div><div class="a" style="left:1268px;top:308.8px;font-size:11.5px;color:#555">9.2</div><div class="a" style="left:1318px;top:308.8px;font-size:11.5px;color:#555">LE1</div><div class="a" style="left:1362px;top:308.8px;font-size:11.5px;color:#555">279.7</div><div class="a" style="left:1412px;top:308.8px;font-size:11.5px;color:#555">2.3</div><div class="a" style="left:1462px;top:308.8px;font-size:11.5px;color:#555">0.0</div><svg class="a" style="left:1183px;top:334.4px" width="17" height="17"><circle cx="8.5" cy="8.5" r="8" fill="#4cc24c"/><path d="M4.5 8.5 l3 3 l5 -5.5" stroke="#fff" stroke-width="2.2" fill="none"/></svg><div class="a" style="left:1219px;top:337.7px;font-size:11.5px;color:#555;letter-spacing:-0.25px">C-w 1</div><div class="a" style="left:1268px;top:337.7px;font-size:11.5px;color:#555">5.9</div><div class="a" style="left:1318px;top:337.7px;font-size:11.5px;color:#555">LE1</div><div class="a" style="left:1362px;top:337.7px;font-size:11.5px;color:#555">280.6</div><div class="a" style="left:1412px;top:337.7px;font-size:11.5px;color:#555">2.7</div><div class="a" style="left:1462px;top:337.7px;font-size:11.5px;color:#555">0.0</div><svg class="a" style="left:1183px;top:363.3px" width="17" height="17"><circle cx="8.5" cy="8.5" r="8" fill="#4cc24c"/><path d="M4.5 8.5 l3 3 l5 -5.5" stroke="#fff" stroke-width="2.2" fill="none"/></svg><div class="a" style="left:1219px;top:366.6px;font-size:11.5px;color:#555;letter-spacing:-0.25px">B-bfl 1</div><div class="a" style="left:1268px;top:366.6px;font-size:11.5px;color:#555">10.0</div><div class="a" style="left:1318px;top:366.6px;font-size:11.5px;color:#555">LE1</div><div class="a" style="left:1362px;top:366.6px;font-size:11.5px;color:#555">275.2</div><div class="a" style="left:1412px;top:366.6px;font-size:11.5px;color:#555">0.1</div><div class="a" style="left:1462px;top:366.6px;font-size:11.5px;color:#555">0.0</div><svg class="a" style="left:1183px;top:392.2px" width="17" height="17"><circle cx="8.5" cy="8.5" r="8" fill="#4cc24c"/><path d="M4.5 8.5 l3 3 l5 -5.5" stroke="#fff" stroke-width="2.2" fill="none"/></svg><div class="a" style="left:1219px;top:395.5px;font-size:11.5px;color:#555;letter-spacing:-0.25px">B-tfl 1</div><div class="a" style="left:1268px;top:395.5px;font-size:11.5px;color:#555">10.0</div><div class="a" style="left:1318px;top:395.5px;font-size:11.5px;color:#555">LE1</div><div class="a" style="left:1362px;top:395.5px;font-size:11.5px;color:#555">275.2</div><div class="a" style="left:1412px;top:395.5px;font-size:11.5px;color:#555">0.1</div><div class="a" style="left:1462px;top:395.5px;font-size:11.5px;color:#555">0.0</div><svg class="a" style="left:1183px;top:421.1px" width="17" height="17"><circle cx="8.5" cy="8.5" r="8" fill="#4cc24c"/><path d="M4.5 8.5 l3 3 l5 -5.5" stroke="#fff" stroke-width="2.2" fill="none"/></svg><div class="a" style="left:1219px;top:424.4px;font-size:11.5px;color:#555;letter-spacing:-0.25px">B-w 1</div><div class="a" style="left:1268px;top:424.4px;font-size:11.5px;color:#555">6.5</div><div class="a" style="left:1318px;top:424.4px;font-size:11.5px;color:#555">LE1</div><div class="a" style="left:1362px;top:424.4px;font-size:11.5px;color:#555">250.7</div><div class="a" style="left:1412px;top:424.4px;font-size:11.5px;color:#555">0.0</div><div class="a" style="left:1462px;top:424.4px;font-size:11.5px;color:#555">0.0</div><svg class="a" style="left:1183px;top:450.0px" width="17" height="17"><circle cx="8.5" cy="8.5" r="8" fill="#4cc24c"/><path d="M4.5 8.5 l3 3 l5 -5.5" stroke="#fff" stroke-width="2.2" fill="none"/></svg><div class="a" style="left:1219px;top:453.3px;font-size:11.5px;color:#555;letter-spacing:-0.25px">EP1</div><div class="a" style="left:1268px;top:453.3px;font-size:11.5px;color:#555">10.0</div><div class="a" style="left:1318px;top:453.3px;font-size:11.5px;color:#555">LE1</div><div class="a" style="left:1362px;top:453.3px;font-size:11.5px;color:#555">275.4</div><div class="a" style="left:1412px;top:453.3px;font-size:11.5px;color:#555">0.2</div><div class="a" style="left:1462px;top:453.3px;font-size:11.5px;color:#555">72.0</div><svg class="a" style="left:1183px;top:478.9px" width="17" height="17"><circle cx="8.5" cy="8.5" r="8" fill="#4cc24c"/><path d="M4.5 8.5 l3 3 l5 -5.5" stroke="#fff" stroke-width="2.2" fill="none"/></svg><div class="a" style="left:1219px;top:482.2px;font-size:11.5px;color:#555;letter-spacing:-0.25px">STIFF1a</div><div class="a" style="left:1268px;top:482.2px;font-size:11.5px;color:#555">10.0</div><div class="a" style="left:1318px;top:482.2px;font-size:11.5px;color:#555">LE1</div><div class="a" style="left:1362px;top:482.2px;font-size:11.5px;color:#555">247.6</div><div class="a" style="left:1412px;top:482.2px;font-size:11.5px;color:#555">0.0</div><div class="a" style="left:1462px;top:482.2px;font-size:11.5px;color:#555">0.0</div><svg class="a" style="left:1183px;top:507.9px" width="17" height="17"><circle cx="8.5" cy="8.5" r="8" fill="#4cc24c"/><path d="M4.5 8.5 l3 3 l5 -5.5" stroke="#fff" stroke-width="2.2" fill="none"/></svg><div class="a" style="left:1219px;top:511.2px;font-size:11.5px;color:#555;letter-spacing:-0.25px">STIFF1b</div><div class="a" style="left:1268px;top:511.2px;font-size:11.5px;color:#555">10.0</div><div class="a" style="left:1318px;top:511.2px;font-size:11.5px;color:#555">LE1</div><div class="a" style="left:1362px;top:511.2px;font-size:11.5px;color:#555">247.7</div><div class="a" style="left:1412px;top:511.2px;font-size:11.5px;color:#555">0.0</div><div class="a" style="left:1462px;top:511.2px;font-size:11.5px;color:#555">0.0</div><svg class="a" style="left:1183px;top:536.8px" width="17" height="17"><circle cx="8.5" cy="8.5" r="8" fill="#4cc24c"/><path d="M4.5 8.5 l3 3 l5 -5.5" stroke="#fff" stroke-width="2.2" fill="none"/></svg><div class="a" style="left:1219px;top:540.1px;font-size:11.5px;color:#555;letter-spacing:-0.25px">STIFF1c</div><div class="a" style="left:1268px;top:540.1px;font-size:11.5px;color:#555">10.0</div><div class="a" style="left:1318px;top:540.1px;font-size:11.5px;color:#555">LE1</div><div class="a" style="left:1362px;top:540.1px;font-size:11.5px;color:#555">247.8</div><div class="a" style="left:1412px;top:540.1px;font-size:11.5px;color:#555">0.0</div><div class="a" style="left:1462px;top:540.1px;font-size:11.5px;color:#555">0.0</div><svg class="a" style="left:1183px;top:565.7px" width="17" height="17"><circle cx="8.5" cy="8.5" r="8" fill="#4cc24c"/><path d="M4.5 8.5 l3 3 l5 -5.5" stroke="#fff" stroke-width="2.2" fill="none"/></svg><div class="a" style="left:1219px;top:569.0px;font-size:11.5px;color:#555;letter-spacing:-0.25px">STIFF1d</div><div class="a" style="left:1268px;top:569.0px;font-size:11.5px;color:#555">10.0</div><div class="a" style="left:1318px;top:569.0px;font-size:11.5px;color:#555">LE1</div><div class="a" style="left:1362px;top:569.0px;font-size:11.5px;color:#555">247.9</div><div class="a" style="left:1412px;top:569.0px;font-size:11.5px;color:#555">0.0</div><div class="a" style="left:1462px;top:569.0px;font-size:11.5px;color:#555">0.0</div><div class="a" style="left:1215px;top:444.1px;width:49px;height:28.9px;border:1px solid #f0a060"></div><svg class="a" style="left:1148px;top:453.1px" width="10" height="12"><path d="M2 1 l5 5 l-5 5" stroke="#333" stroke-width="1.5" fill="none"/></svg>
</div></div>
<div class="a" style="left:1893px;top:196px;width:16px;height:382px;background:#f0f0f0"></div>
<div class="a" style="left:1893px;top:213px;width:16px;height:252px;background:#cdcdcd"></div>
<svg class="a" style="left:1893px;top:198px" width="16" height="12"><path d="M4 8 l4 -4 l4 4" stroke="#666" stroke-width="1.2" fill="none"/></svg>
<svg class="a" style="left:1893px;top:565px" width="16" height="12"><path d="M4 4 l4 4 l4 -4" stroke="#666" stroke-width="1.2" fill="none"/></svg>
<div class="a" style="left:1918px;top:186px;width:1px;height:940px;background:#c8c8c8"></div>
<div class="a" style="left:1128px;top:589px;width:792px;height:5px;background:#cacaca"></div>
<div class="a" style="left:1130px;top:598px;width:24px;height:24px;border:1px solid #d0d0d0;border-radius:2px;background:linear-gradient(#f4f4f4,#dcdcdc)"></div>
<svg class="a" style="left:1130px;top:598px" width="24" height="24"><g stroke="#666" stroke-width="1.3" fill="#666"><path d="M7 7 l3.5 3.5 M17 7 l-3.5 3.5 M7 17 l3.5 -3.5 M17 17 l-3.5 -3.5"/></g><g fill="#666"><path d="M6 6 h4 l-4 4z M18 6 h-4 l4 4z M6 18 h4 l-4 -4z M18 18 h-4 l4 -4z"/></g></svg>
<!--PLATE--><svg class="a" style="left:1264px;top:621px" width="282" height="478"><rect x="0" y="0" width="282" height="478" fill="#4a30d8"/><path fill="#4434e0" fill-rule="evenodd" d="M0 0 0 477 281 477 281 0ZM185 238 197 227 204 224 212 223 223 226 229 230 237 239 223 251 210 254 197 250ZM44 238 58 226 71 223 84 227 96 239 84 250 77 253 69 254 58 251 52 247Z"/><path fill="#3838f0" fill-rule="evenodd" d="M0 0 0 229 5 228 17 222 38 208 58 202 67 201 82 202 102 208 117 218 117 259 106 267 90 273 73 276 58 275 38 269 17 255 5 249 0 248 0 477 281 477 281 248 276 249 264 255 243 269 223 275 214 276 199 275 179 269 164 259 164 218 175 210 191 204 208 201 223 202 243 208 264 222 276 228 281 229 281 0Z"/><path fill="#3080f0" fill-rule="evenodd" d="M0 0 0 195 18 193 42 187 62 184 87 185 117 192 117 285 116 286 87 292 62 293 42 290 18 284 0 282 0 477 281 477 281 282 263 284 239 290 219 293 194 292 164 285 164 192 165 191 194 185 219 184 239 187 263 193 281 195 281 0Z"/><path fill="#30c8f8" fill-rule="evenodd" d="M3 0 3 3 0 6 0 177 30 176 46 174 94 174 95 175 133 176 134 177 134 300 133 301 111 301 94 303 46 303 30 301 0 300 0 471 3 474 3 477 278 477 278 474 281 471 281 300 251 301 235 303 187 303 186 302 148 301 147 300 147 177 148 176 170 176 187 174 235 174 251 176 281 177 281 6 278 3 278 0Z"/><path fill="#30e8e8" fill-rule="evenodd" d="M0 312 0 464 4 468 7 477 274 477 277 468 281 464 281 312 233 313 232 314 190 314 189 313 163 313 162 312 49 314 48 313ZM7 0 4 9 0 13 0 165 48 164 49 163 91 163 92 164 118 164 119 165 232 163 233 164 281 165 281 13 277 9 274 0Z"/><path fill="#30c0a0" fill-rule="evenodd" d="M0 322 0 458 7 465 10 471 11 477 270 477 271 471 274 465 281 458 281 322 233 322 232 323ZM0 19 0 155 48 155 49 154 281 155 281 19 274 12 271 6 270 0 11 0 10 6 7 12Z"/><path fill="#3a9a50" fill-rule="evenodd" d="M0 330 0 452 11 463 14 470 14 477 267 477 267 470 270 463 281 452 281 330ZM0 25 0 147 281 147 281 25 270 14 267 7 267 0 14 0 14 7 11 14Z"/><path fill="#58a848" fill-rule="evenodd" d="M0 336 1 344 0 345 0 445 14 459 18 469 19 477 262 477 263 469 267 459 281 445 281 345 280 344 281 336ZM0 32 0 132 1 133 0 141 281 141 280 133 281 132 281 32 267 18 263 8 262 0 19 0 18 8 14 18Z"/><path fill="#98c040" fill-rule="evenodd" d="M0 341 0 343 11 343 12 344 0 349 0 439 5 442 14 451 18 457 22 467 23 477 258 477 259 467 263 457 267 451 276 442 281 439 281 349 269 344 270 343 281 343 281 341 188 340 187 339 94 339 93 340ZM264 343 265 342 269 343 268 344ZM12 343 13 342 17 343 16 344ZM0 38 0 128 12 133 11 134 0 134 0 136 93 137 94 138 187 138 188 137 281 136 281 134 270 134 269 133 281 128 281 38 276 35 267 26 263 20 259 10 258 0 23 0 22 10 18 20 14 26 5 35ZM264 134 265 133 269 134 268 135ZM12 134 13 133 17 134 16 135Z"/><path fill="#d8e040" fill-rule="evenodd" d="M0 355 0 432 7 437 20 451 26 465 27 477 254 477 255 465 261 451 274 437 281 432 281 355 276 351 267 347 247 344 201 343 200 342 81 342 80 343 49 343 48 344 25 345 11 348ZM0 45 0 122 5 126 14 130 34 133 80 134 81 135 200 135 201 134 232 134 233 133 256 132 270 129 281 122 281 45 274 40 261 26 255 12 254 0 27 0 26 12 20 26 7 40Z"/><path fill="#f0e830" fill-rule="evenodd" d="M0 359 0 426 9 432 21 444 25 450 30 462 32 477 249 477 251 462 256 450 260 444 272 432 281 426 281 359 276 358 268 353 254 349 227 346 205 346 204 345 77 345 76 346 54 346 27 349 13 353 5 358ZM0 51 0 118 5 119 13 124 27 128 54 131 76 131 77 132 204 132 205 131 227 131 254 128 268 124 276 119 281 118 281 51 272 45 260 33 256 27 251 15 249 0 32 0 30 15 25 27 21 33 9 45Z"/><path fill="#f8c830" fill-rule="evenodd" d="M0 361 0 419 16 431 29 447 35 463 36 477 245 477 246 463 252 447 265 431 281 419 281 361 267 357 238 352 212 351 211 350 100 349 99 350 70 350 69 351 43 352 14 357ZM0 58 0 116 14 120 43 125 69 126 70 127 181 128 182 127 211 127 212 126 238 125 267 120 281 116 281 58 265 46 252 30 246 14 245 0 36 0 35 14 29 30 16 46Z"/><path fill="#f5a030" fill-rule="evenodd" d="M0 363 0 413 16 424 27 435 33 444 40 463 41 477 240 477 241 463 248 444 254 435 265 424 281 413 281 363 263 358 211 353 99 352 98 353 70 353 69 354 31 356 13 359ZM0 64 0 114 18 119 70 124 182 125 183 124 211 124 212 123 250 121 268 118 281 114 281 64 265 53 254 42 248 33 241 14 240 0 41 0 40 14 33 33 27 42 16 53Z"/><path fill="#f08030" fill-rule="evenodd" d="M0 365 0 406 22 422 36 439 43 455 46 477 235 477 238 455 245 439 259 422 281 406 281 365 252 358 220 356 219 355 200 355 199 354 157 354 156 353 82 354 81 355 62 355 61 356 29 358ZM182 432 186 435 184 439 181 439 179 436ZM98 432 101 435 99 439 95 437 95 434ZM0 71 0 112 29 119 61 121 62 122 81 122 82 123 124 123 125 124 199 123 200 122 219 122 220 121 252 119 281 112 281 71 259 55 245 38 238 22 235 0 46 0 43 22 36 38 22 55ZM179 41 181 38 184 38 186 42 182 45ZM97 38 101 40 101 42 98 45 95 43 95 40Z"/><path fill="#f05a30" fill-rule="evenodd" d="M0 369 0 400 21 414 34 427 39 434 48 455 51 477 230 477 233 455 242 434 247 427 260 414 281 400 281 369 268 363 237 358 210 357 209 356 186 356 185 355 72 356 22 361 10 364ZM182 430 185 431 187 434 187 438 184 441 181 441 178 438 178 434ZM98 430 103 435 100 441 96 441 93 437 93 434ZM0 77 0 108 13 114 44 119 71 120 72 121 95 121 96 122 209 121 259 116 271 113 281 108 281 77 260 63 247 50 242 43 233 22 230 0 51 0 48 22 39 43 34 50 21 63ZM181 36 184 36 187 39 187 43 183 47 180 46 178 43 178 39ZM96 36 100 36 103 40 102 44 98 47 93 43 93 40Z"/><path fill="#f03a3a" fill-rule="evenodd" d="M0 374 0 393 26 411 36 421 45 434 50 445 54 459 55 477 226 477 226 465 229 451 233 440 239 429 255 411 281 393 281 374 279 372 266 366 251 362 215 358 166 357 165 356 116 356 115 357 66 358 30 362 15 366ZM180 429 185 429 189 434 187 441 184 443 179 442 176 437 176 434ZM96 429 100 429 104 433 104 438 99 443 96 443 92 439 92 433ZM0 84 0 103 2 105 15 111 30 115 66 119 115 120 116 121 165 121 166 120 215 119 251 115 266 111 281 103 281 84 255 66 245 56 236 43 231 32 227 18 226 0 55 0 55 12 52 26 48 37 42 48 26 66ZM181 34 186 35 189 40 189 43 185 48 180 48 176 43 178 36ZM96 34 101 35 104 39 104 44 100 48 96 48 92 44 92 38Z"/><path fill="#d83434" fill-rule="evenodd" d="M2 381 2 388 31 408 45 424 53 439 57 450 60 465 60 477 221 477 221 465 224 450 228 439 236 424 250 408 279 388 279 381 270 373 263 369 235 363 200 361 199 360 174 360 173 359 108 359 107 360 82 360 81 361 46 363 18 369 11 373ZM180 427 185 427 190 432 190 439 184 445 179 444 175 439 175 432ZM95 427 102 428 106 434 105 440 99 445 94 444 90 438 90 433ZM2 89 2 96 11 104 18 108 46 114 81 116 82 117 107 117 108 118 173 118 174 117 199 117 200 116 235 114 263 108 270 104 279 96 279 89 250 69 236 53 228 38 224 27 221 12 221 0 60 0 60 12 57 27 53 38 45 53 31 69ZM181 32 186 33 190 38 190 45 185 50 180 50 175 45 175 38ZM97 32 101 33 106 39 105 46 100 50 95 50 90 44 90 39 92 35Z"/><path fill="#c83232" fill-rule="evenodd" d="M16 380 16 391 29 399 45 415 53 427 59 440 64 458 65 477 216 477 217 458 222 440 228 427 236 415 252 399 265 391 265 380 251 373 224 367 196 364 182 364 181 363 100 363 99 364 74 365 37 371 25 375ZM181 424 187 425 191 429 193 434 192 441 186 447 179 447 175 444 172 438 174 429 178 425ZM96 424 102 425 108 432 108 439 106 443 101 447 94 447 88 440 88 432 90 428ZM16 86 16 97 30 104 57 110 85 113 99 113 100 114 181 114 182 113 207 112 244 106 256 102 265 97 265 86 252 78 236 62 228 50 222 37 217 19 216 0 65 0 64 19 59 37 53 50 45 62 29 78ZM179 30 188 31 193 39 191 48 187 52 184 53 178 52 174 48 172 43 173 36ZM94 30 103 31 108 38 107 47 100 53 96 53 92 51 88 45 88 37Z"/><path fill="none" stroke="#111" stroke-width="1.3" d="M0.0 0.0 0.0 23.9 0.0 47.8 0.0 71.7 0.0 95.6 0.0 119.5 0.0 143.4 0.0 167.3 0.0 191.2 0.0 215.1 0.0 239.0 0.0 262.9 0.0 286.8 0.0 310.7 0.0 334.6 0.0 358.5 0.0 382.4 0.0 406.3 0.0 430.2 0.0 454.1 0.0 478.0M23.5 0.0 23.5 23.9 23.5 47.8 23.5 71.7 23.5 95.6 23.5 119.5 23.5 143.4 23.5 167.3 23.5 191.2 23.5 215.1 23.5 239.0 23.5 262.9 23.5 286.8 23.5 310.7 23.5 334.6 23.5 358.5 23.5 382.4 23.5 406.3 23.5 430.2 23.5 454.1 23.5 478.0M47.0 0.0 47.0 23.9 47.0 47.8 47.0 71.7 47.0 95.6 47.0 119.5 47.0 143.4 47.0 167.3 47.0 191.2 47.0 215.1 47.0 239.0 47.0 262.9 47.0 286.8 47.0 310.7 47.0 334.6 47.0 358.5 47.0 382.4 47.0 406.3 47.0 430.2 47.0 454.1 47.0 478.0M70.5 0.0 67.8 20.8 60.5 44.6 62.2 76.1 69.4 97.1 70.5 119.5 70.5 143.4 70.5 167.3 70.5 191.2 70.5 215.1 70.5 239.0 70.5 262.9 70.5 286.8 70.5 310.7 70.5 334.6 70.5 358.5 69.4 380.9 62.2 401.9 60.5 433.4 67.8 457.2 70.5 478.0M94.0 0.0 92.8 15.3 85.4 30.4 89.3 87.8 93.3 101.5 94.0 119.5 94.0 143.4 94.0 167.3 94.0 191.2 94.0 215.1 94.0 239.0 94.0 262.9 94.0 286.8 94.0 310.7 94.0 334.6 94.0 358.5 93.3 376.5 89.3 390.2 85.4 447.6 92.8 462.7 94.0 478.0M117.5 0.0 120.8 18.3 130.4 41.8 127.6 79.6 119.3 99.2 117.5 119.5 117.5 143.4 117.5 167.3 117.5 191.2 117.5 215.1 117.5 239.0 117.5 262.9 117.5 286.8 117.5 310.7 117.5 334.6 117.5 358.5 119.3 378.8 127.6 398.4 130.4 436.2 120.8 459.7 117.5 478.0M141.0 0.0 141.0 23.9 139.2 45.6 139.8 74.5 141.0 95.6 141.0 119.5 141.0 143.4 141.0 167.3 141.0 191.2 141.0 215.1 141.0 239.0 141.0 262.9 141.0 286.8 141.0 310.7 141.0 334.6 141.0 358.5 141.0 382.4 139.8 403.5 139.2 432.4 141.0 454.1 141.0 478.0M164.5 0.0 161.2 18.1 151.4 41.5 154.4 79.9 162.7 99.3 164.5 119.5 164.5 143.4 164.5 167.3 164.5 191.2 164.5 215.1 164.5 239.0 164.5 262.9 164.5 286.8 164.5 310.7 164.5 334.6 164.5 358.5 162.7 378.7 154.4 398.1 151.4 436.5 161.2 459.9 164.5 478.0M188.0 0.0 189.3 15.3 197.4 31.0 193.3 87.5 188.8 101.5 188.0 119.5 188.0 143.4 188.0 167.3 188.0 191.2 188.0 215.1 188.0 239.0 188.0 262.9 188.0 286.8 188.0 310.7 188.0 334.6 188.0 358.5 188.8 376.5 193.3 390.5 197.4 447.0 189.3 462.7 188.0 478.0M211.5 0.0 214.1 20.9 221.3 44.8 219.6 76.0 212.5 97.0 211.5 119.5 211.5 143.4 211.5 167.3 211.5 191.2 211.5 215.1 211.5 239.0 211.5 262.9 211.5 286.8 211.5 310.7 211.5 334.6 211.5 358.5 212.5 381.0 219.6 402.0 221.3 433.2 214.1 457.1 211.5 478.0M235.0 0.0 235.0 23.9 235.0 47.8 235.0 71.7 235.0 95.6 235.0 119.5 235.0 143.4 235.0 167.3 235.0 191.2 235.0 215.1 235.0 239.0 235.0 262.9 235.0 286.8 235.0 310.7 235.0 334.6 235.0 358.5 235.0 382.4 235.0 406.3 235.0 430.2 235.0 454.1 235.0 478.0M258.5 0.0 258.5 23.9 258.5 47.8 258.5 71.7 258.5 95.6 258.5 119.5 258.5 143.4 258.5 167.3 258.5 191.2 258.5 215.1 258.5 239.0 258.5 262.9 258.5 286.8 258.5 310.7 258.5 334.6 258.5 358.5 258.5 382.4 258.5 406.3 258.5 430.2 258.5 454.1 258.5 478.0M282.0 0.0 282.0 23.9 282.0 47.8 282.0 71.7 282.0 95.6 282.0 119.5 282.0 143.4 282.0 167.3 282.0 191.2 282.0 215.1 282.0 239.0 282.0 262.9 282.0 286.8 282.0 310.7 282.0 334.6 282.0 358.5 282.0 382.4 282.0 406.3 282.0 430.2 282.0 454.1 282.0 478.0M0.0 0.0 23.5 0.0 47.0 0.0 70.5 0.0 94.0 0.0 117.5 0.0 141.0 0.0 164.5 0.0 188.0 0.0 211.5 0.0 235.0 0.0 258.5 0.0 282.0 0.0M0.0 23.9 23.5 23.9 47.0 23.9 67.8 20.8 92.8 15.3 120.8 18.3 141.0 23.9 161.2 18.1 189.3 15.3 214.1 20.9 235.0 23.9 258.5 23.9 282.0 23.9M0.0 47.8 23.5 47.8 47.0 47.8 60.5 44.6 85.4 30.4 130.4 41.8 139.2 45.6 151.4 41.5 197.4 31.0 221.3 44.8 235.0 47.8 258.5 47.8 282.0 47.8M0.0 71.7 23.5 71.7 47.0 71.7 62.2 76.1 89.3 87.8 127.6 79.6 139.8 74.5 154.4 79.9 193.3 87.5 219.6 76.0 235.0 71.7 258.5 71.7 282.0 71.7M0.0 95.6 23.5 95.6 47.0 95.6 69.4 97.1 93.3 101.5 119.3 99.2 141.0 95.6 162.7 99.3 188.8 101.5 212.5 97.0 235.0 95.6 258.5 95.6 282.0 95.6M0.0 119.5 23.5 119.5 47.0 119.5 70.5 119.5 94.0 119.5 117.5 119.5 141.0 119.5 164.5 119.5 188.0 119.5 211.5 119.5 235.0 119.5 258.5 119.5 282.0 119.5M0.0 143.4 23.5 143.4 47.0 143.4 70.5 143.4 94.0 143.4 117.5 143.4 141.0 143.4 164.5 143.4 188.0 143.4 211.5 143.4 235.0 143.4 258.5 143.4 282.0 143.4M0.0 167.3 23.5 167.3 47.0 167.3 70.5 167.3 94.0 167.3 117.5 167.3 141.0 167.3 164.5 167.3 188.0 167.3 211.5 167.3 235.0 167.3 258.5 167.3 282.0 167.3M0.0 191.2 23.5 191.2 47.0 191.2 70.5 191.2 94.0 191.2 117.5 191.2 141.0 191.2 164.5 191.2 188.0 191.2 211.5 191.2 235.0 191.2 258.5 191.2 282.0 191.2M0.0 215.1 23.5 215.1 47.0 215.1 70.5 215.1 94.0 215.1 117.5 215.1 141.0 215.1 164.5 215.1 188.0 215.1 211.5 215.1 235.0 215.1 258.5 215.1 282.0 215.1M0.0 239.0 23.5 239.0 47.0 239.0 70.5 239.0 94.0 239.0 117.5 239.0 141.0 239.0 164.5 239.0 188.0 239.0 211.5 239.0 235.0 239.0 258.5 239.0 282.0 239.0M0.0 262.9 23.5 262.9 47.0 262.9 70.5 262.9 94.0 262.9 117.5 262.9 141.0 262.9 164.5 262.9 188.0 262.9 211.5 262.9 235.0 262.9 258.5 262.9 282.0 262.9M0.0 286.8 23.5 286.8 47.0 286.8 70.5 286.8 94.0 286.8 117.5 286.8 141.0 286.8 164.5 286.8 188.0 286.8 211.5 286.8 235.0 286.8 258.5 286.8 282.0 286.8M0.0 310.7 23.5 310.7 47.0 310.7 70.5 310.7 94.0 310.7 117.5 310.7 141.0 310.7 164.5 310.7 188.0 310.7 211.5 310.7 235.0 310.7 258.5 310.7 282.0 310.7M0.0 334.6 23.5 334.6 47.0 334.6 70.5 334.6 94.0 334.6 117.5 334.6 141.0 334.6 164.5 334.6 188.0 334.6 211.5 334.6 235.0 334.6 258.5 334.6 282.0 334.6M0.0 358.5 23.5 358.5 47.0 358.5 70.5 358.5 94.0 358.5 117.5 358.5 141.0 358.5 164.5 358.5 188.0 358.5 211.5 358.5 235.0 358.5 258.5 358.5 282.0 358.5M0.0 382.4 23.5 382.4 47.0 382.4 69.4 380.9 93.3 376.5 119.3 378.8 141.0 382.4 162.7 378.7 188.8 376.5 212.5 381.0 235.0 382.4 258.5 382.4 282.0 382.4M0.0 406.3 23.5 406.3 47.0 406.3 62.2 401.9 89.3 390.2 127.6 398.4 139.8 403.5 154.4 398.1 193.3 390.5 219.6 402.0 235.0 406.3 258.5 406.3 282.0 406.3M0.0 430.2 23.5 430.2 47.0 430.2 60.5 433.4 85.4 447.6 130.4 436.2 139.2 432.4 151.4 436.5 197.4 447.0 221.3 433.2 235.0 430.2 258.5 430.2 282.0 430.2M0.0 454.1 23.5 454.1 47.0 454.1 67.8 457.2 92.8 462.7 120.8 459.7 141.0 454.1 161.2 459.9 189.3 462.7 214.1 457.1 235.0 454.1 258.5 454.1 282.0 454.1M0.0 478.0 23.5 478.0 47.0 478.0 70.5 478.0 94.0 478.0 117.5 478.0 141.0 478.0 164.5 478.0 188.0 478.0 211.5 478.0 235.0 478.0 258.5 478.0 282.0 478.0"/><path fill="none" stroke="#111" stroke-width="1.3" d="M122.4 56.7 115.4 73.7 98.4 80.7 81.4 73.7 74.4 56.7 81.4 39.7 98.4 32.7 115.4 39.7ZM109.4 56.7 122.4 56.7M106.2 64.5 115.4 73.7M98.4 67.7 98.4 80.7M90.6 64.5 81.4 73.7M87.4 56.7 74.4 56.7M90.6 48.9 81.4 39.7M98.4 45.7 98.4 32.7M106.2 48.9 115.4 39.7"/><path fill="#a8a8a8" stroke="#333" stroke-width="1" d="M109.1 61.1 102.8 67.4 94.0 67.4 87.7 61.1 87.7 52.3 94.0 46.0 102.8 46.0 109.1 52.3Z"/><text x="98.4" y="62.7" text-anchor="middle" font-size="16" fill="#222" font-family="Liberation Sans">2</text><path fill="none" stroke="#111" stroke-width="1.3" d="M207.0 56.7 200.0 73.7 183.0 80.7 166.0 73.7 159.0 56.7 166.0 39.7 183.0 32.7 200.0 39.7ZM194.0 56.7 207.0 56.7M190.8 64.5 200.0 73.7M183.0 67.7 183.0 80.7M175.2 64.5 166.0 73.7M172.0 56.7 159.0 56.7M175.2 48.9 166.0 39.7M183.0 45.7 183.0 32.7M190.8 48.9 200.0 39.7"/><path fill="#a8a8a8" stroke="#333" stroke-width="1" d="M193.7 61.1 187.4 67.4 178.6 67.4 172.3 61.1 172.3 52.3 178.6 46.0 187.4 46.0 193.7 52.3Z"/><text x="183.0" y="62.7" text-anchor="middle" font-size="16" fill="#222" font-family="Liberation Sans">1</text><path fill="none" stroke="#111" stroke-width="1.3" d="M122.4 421.3 115.4 438.3 98.4 445.3 81.4 438.3 74.4 421.3 81.4 404.3 98.4 397.3 115.4 404.3ZM109.4 421.3 122.4 421.3M106.2 429.1 115.4 438.3M98.4 432.3 98.4 445.3M90.6 429.1 81.4 438.3M87.4 421.3 74.4 421.3M90.6 413.5 81.4 404.3M98.4 410.3 98.4 397.3M106.2 413.5 115.4 404.3"/><path fill="#a8a8a8" stroke="#333" stroke-width="1" d="M109.1 425.7 102.8 432.0 94.0 432.0 87.7 425.7 87.7 416.9 94.0 410.6 102.8 410.6 109.1 416.9Z"/><text x="98.4" y="427.3" text-anchor="middle" font-size="16" fill="#222" font-family="Liberation Sans">4</text><path fill="none" stroke="#111" stroke-width="1.3" d="M207.0 421.3 200.0 438.3 183.0 445.3 166.0 438.3 159.0 421.3 166.0 404.3 183.0 397.3 200.0 404.3ZM194.0 421.3 207.0 421.3M190.8 429.1 200.0 438.3M183.0 432.3 183.0 445.3M175.2 429.1 166.0 438.3M172.0 421.3 159.0 421.3M175.2 413.5 166.0 404.3M183.0 410.3 183.0 397.3M190.8 413.5 200.0 404.3"/><path fill="#a8a8a8" stroke="#333" stroke-width="1" d="M193.7 425.7 187.4 432.0 178.6 432.0 172.3 425.7 172.3 416.9 178.6 410.6 187.4 410.6 193.7 416.9Z"/><text x="183.0" y="427.3" text-anchor="middle" font-size="16" fill="#222" font-family="Liberation Sans">3</text><rect x="0.75" y="0.75" width="280.5" height="476.5" fill="none" stroke="#111" stroke-width="1.5"/></svg><!--/PLATE-->
<!-- status bar -->
<div class="a dark2" style="left:0;top:1126px;width:1920px;height:34px"></div>
<div class="a" style="left:0;top:1138px;width:1920px;font-size:12px;font-weight:bold;white-space:nowrap;letter-spacing:-0.25px">
<span class="a" style="left:24px;color:#8c8c8c">Design code:</span><span class="a" style="left:100px;color:#fff">EN</span>
<span class="a" style="left:136px;color:#8c8c8c">Analysis:</span><span class="a" style="left:190px;color:#fff">Stress, strain</span>
<span class="a" style="left:283px;color:#8c8c8c">Load effects:</span><span class="a" style="left:359px;color:#fff">In equilibrium</span>
<span class="a" style="left:458px;color:#8c8c8c">Units:</span><span class="a" style="left:498px;color:#fff">mm</span>
</div>
<div class="a" style="left:1797px;top:1138px;font-size:12px;color:#fff;white-space:nowrap"><span style="color:#f26f21">www.</span>ideastatica<span style="color:#f26f21">.com</span></div>
</body></html>
